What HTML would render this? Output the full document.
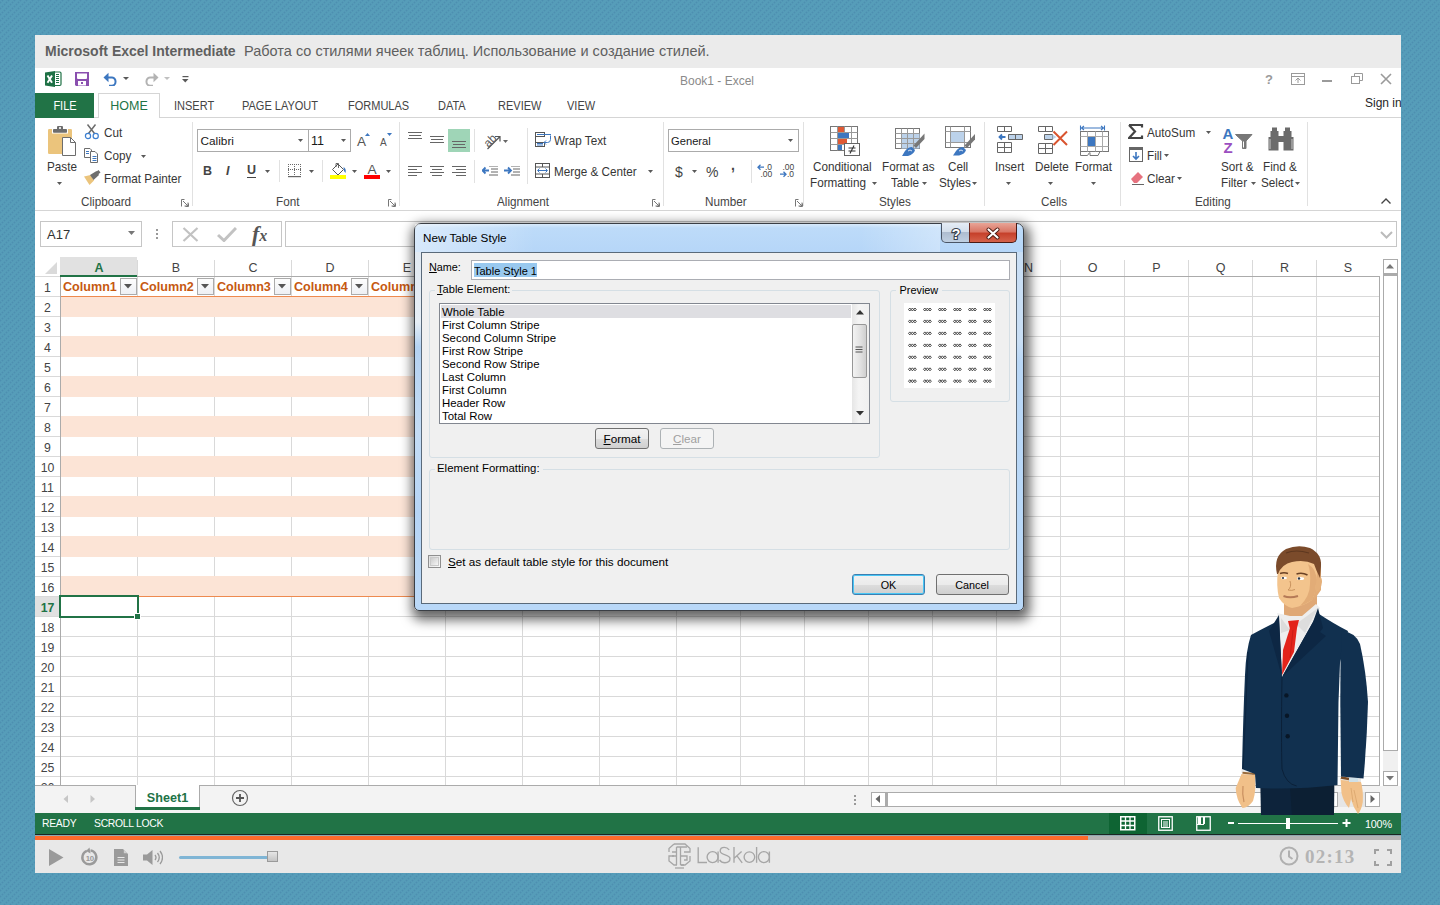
<!DOCTYPE html><html><head><meta charset="utf-8"><style>
html,body{margin:0;padding:0;}
body{width:1440px;height:905px;overflow:hidden;position:relative;background:#539ab7;font-family:"Liberation Sans", sans-serif;}
.t{position:absolute;white-space:nowrap;}
.r{position:absolute;}
</style></head><body>
<div class="r" style="left:0px;top:0px;width:1440px;height:905px;background-color:#569db9;background-image:radial-gradient(circle at 2.5px 0.5px,#4d8fb0 0,#4d8fb0 0.4px,rgba(77,143,176,0) 1.4px),radial-gradient(circle at 0.5px 2.5px,#4d8fb0 0,#4d8fb0 0.4px,rgba(77,143,176,0) 1.4px),radial-gradient(circle at 4.5px 4.5px,#4d8fb0 0,#4d8fb0 0.4px,rgba(77,143,176,0) 1.4px),radial-gradient(circle at 2.5px 6.5px,#4d8fb0 0,#4d8fb0 0.4px,rgba(77,143,176,0) 1.4px),radial-gradient(circle at 6.5px 2.5px,#4d8fb0 0,#4d8fb0 0.4px,rgba(77,143,176,0) 1.4px);background-size:6px 6px"></div>
<div class="r" style="left:35px;top:35px;width:1366px;height:838px;background:#ffffff"></div>
<div class="r" style="left:35px;top:35px;width:1366px;height:33px;background:#ebebeb"></div>
<div class="t" style="left:45px;top:44.15px;font-size:14px;line-height:14px;color:#5f5f5f;font-weight:bold;">Microsoft Excel Intermediate</div>
<div class="t" style="left:244px;top:43.73px;font-size:14.5px;line-height:14.5px;color:#5f5f5f;">Работа со стилями ячеек таблиц. Использование и создание стилей.</div>
<svg class="r" style="left:45px;top:71px" width="17" height="16" viewBox="0 0 17 16"><rect x="9" y="1" width="7" height="13.5" rx="1.2" fill="#fff" stroke="#1e7145" stroke-width="1.2"/><path d="M11 3.5h3M11 5.5h3M11 7.5h3M11 9.5h3M11 11.5h3" stroke="#1e7145" stroke-width="1.1"/><path d="M0 1.5 L10 0 L10 16 L0 14.5 Z" fill="#1e7145"/><path d="M2.5 4.5L7 11.8M7 4.5L2.5 11.8" stroke="#fff" stroke-width="1.9"/></svg>
<svg class="r" style="left:75px;top:72px" width="15" height="14" viewBox="0 0 15 14"><path d="M0 0h14v14h-13l-1-1z" fill="#8a4faf"/><path d="M2 1.5h10v4.5q0 1-1 1h-8q-1 0-1-1z" fill="#fff"/><path d="M3 9h8v4.5h-8z" fill="#fff"/><rect x="6" y="10" width="2" height="2" fill="#8a4faf"/></svg>
<svg class="r" style="left:103px;top:72px" width="16" height="14" viewBox="0 0 16 14"><path d="M2.5 5.5 H9 A4.2 4.2 0 0 1 9 13.8 H6" fill="none" stroke="#3d77c0" stroke-width="2"/><path d="M0.5 5.5 L5.5 0.8 L5.5 10.2 Z" fill="#3d77c0"/></svg>
<svg class="r" style="left:123px;top:77px" width="7" height="4" viewBox="0 0 7 4"><path d="M0 0h6l-3 3z" fill="#595959"/></svg>
<svg class="r" style="left:143px;top:72px" width="16" height="14" viewBox="0 0 16 14"><path d="M13.5 5.5 H7 A4.2 4.2 0 0 0 7 13.8 H10" fill="none" stroke="#b3b3b3" stroke-width="2"/><path d="M15.5 5.5 L10.5 0.8 L10.5 10.2 Z" fill="#b3b3b3"/></svg>
<svg class="r" style="left:164px;top:77px" width="7" height="4" viewBox="0 0 7 4"><path d="M0 0h6l-3 3z" fill="#c0c0c0"/></svg>
<svg class="r" style="left:182px;top:76px" width="7" height="8" viewBox="0 0 7 8"><rect x="0.5" y="0" width="6" height="1.2" fill="#595959"/><path d="M0 3h6.5l-3.25 3.5z" fill="#595959"/></svg>
<div class="t" style="left:617px;width:200px;text-align:center;top:74.84px;font-size:12px;line-height:12px;color:#8a8a8a;">Book1 - Excel</div>
<div class="t" style="left:1169px;width:200px;text-align:center;top:73.00px;font-size:13px;line-height:13px;color:#9a9a9a;font-weight:bold;">?</div>
<svg class="r" style="left:1291px;top:73px" width="14" height="12" viewBox="0 0 14 12"><rect x="0.5" y="0.5" width="13" height="11" fill="none" stroke="#9a9a9a"/><path d="M0.5 3.5h13" stroke="#9a9a9a"/><path d="M7 10V5M4.5 7.5L7 5l2.5 2.5" fill="none" stroke="#9a9a9a"/></svg>
<div class="r" style="left:1322px;top:80px;width:10px;height:2px;background:#9a9a9a"></div>
<svg class="r" style="left:1351px;top:73px" width="12" height="11" viewBox="0 0 12 11"><rect x="0.5" y="3.5" width="8" height="7" fill="none" stroke="#9a9a9a"/><path d="M3.5 3.5V0.5h8v7h-3" fill="none" stroke="#9a9a9a"/></svg>
<svg class="r" style="left:1380px;top:73px" width="12" height="12" viewBox="0 0 12 12"><path d="M1 1L11 11M11 1L1 11" stroke="#9a9a9a" stroke-width="1.6"/></svg>
<div class="t" style="left:1365px;top:96.84px;font-size:12px;line-height:12px;color:#262626;">Sign in</div>
<div class="r" style="left:35px;top:117px;width:1366px;height:1px;background:#d5d5d5"></div>
<div class="r" style="left:35px;top:93px;width:59px;height:25px;background:#217346"></div>
<div class="t" style="left:-35.5px;width:200px;text-align:center;top:100.14px;font-size:12px;line-height:12px;color:#ffffff;transform:scaleX(0.917);transform-origin:50% 0;">FILE</div>
<div class="r" style="left:98px;top:93px;width:62px;height:25px;background:#fff;border:1px solid #d5d5d5;border-bottom:none;box-sizing:border-box"></div>
<div class="t" style="left:28.5px;width:200px;text-align:center;top:100.14px;font-size:12px;line-height:12px;color:#217346;transform:scaleX(1.04);transform-origin:50% 0;">HOME</div>
<div class="t" style="left:174.3px;top:100.14px;font-size:12px;line-height:12px;color:#444444;transform:scaleX(0.917);transform-origin:0 0;">INSERT</div>
<div class="t" style="left:242px;top:100.14px;font-size:12px;line-height:12px;color:#444444;transform:scaleX(0.917);transform-origin:0 0;">PAGE LAYOUT</div>
<div class="t" style="left:348.2px;top:100.14px;font-size:12px;line-height:12px;color:#444444;transform:scaleX(0.917);transform-origin:0 0;">FORMULAS</div>
<div class="t" style="left:438.2px;top:100.14px;font-size:12px;line-height:12px;color:#444444;transform:scaleX(0.917);transform-origin:0 0;">DATA</div>
<div class="t" style="left:498px;top:100.14px;font-size:12px;line-height:12px;color:#444444;transform:scaleX(0.917);transform-origin:0 0;">REVIEW</div>
<div class="t" style="left:566.7px;top:100.14px;font-size:12px;line-height:12px;color:#444444;transform:scaleX(0.917);transform-origin:0 0;">VIEW</div>
<div class="r" style="left:35px;top:210px;width:1366px;height:1px;background:#d5d5d5"></div>
<svg class="r" style="left:47px;top:125px" width="31" height="32" viewBox="0 0 31 32"><rect x="1" y="4" width="24" height="25" rx="1.2" fill="#ebc47c"/><rect x="5" y="3.5" width="16" height="5" fill="#fff"/><rect x="6" y="4" width="14" height="3.8" rx="0.8" fill="#6d6d6d"/><rect x="10" y="1" width="6" height="4" rx="1" fill="#6d6d6d"/><rect x="12" y="2.2" width="2" height="1.6" fill="#fff"/><path d="M15.5 12.5h8l5 5v13h-13z" fill="#fff" stroke="#6d6d6d" stroke-width="1"/><path d="M23.5 12.5v5h5" fill="none" stroke="#6d6d6d"/></svg>
<div class="t" style="left:46.5px;top:161.13px;font-size:12.6px;line-height:12.6px;color:#363636;transform:scaleX(0.93);transform-origin:0 0;">Paste</div>
<svg class="r" style="left:57px;top:182px" width="6" height="4" viewBox="0 0 6 4"><path d="M0 0h5l-2.5 3z" fill="#595959"/></svg>
<svg class="r" style="left:83px;top:123px" width="17" height="17" viewBox="0 0 17 17"><path d="M5.5 10.5L12.5 1.5M11.5 10.5L4.5 1.5" stroke="#6d6d6d" stroke-width="1.5"/><circle cx="5" cy="13" r="2.6" fill="#fff" stroke="#3d7fd0" stroke-width="1.2"/><circle cx="12.7" cy="13" r="2.6" fill="#fff" stroke="#3d7fd0" stroke-width="1.2"/></svg>
<div class="t" style="left:103.5px;top:126.93px;font-size:12.6px;line-height:12.6px;color:#363636;transform:scaleX(0.93);transform-origin:0 0;">Cut</div>
<svg class="r" style="left:83px;top:147px" width="17" height="17" viewBox="0 0 17 17"><path d="M1.5 1.5h5.5l1.5 1.5v7.5h-7z" fill="#fff" stroke="#6d6d6d"/><path d="M3 4.5h3M3 6.5h3" stroke="#3d77c0"/><path d="M7.5 4.5h4.5l2.5 2.5v8.5h-7z" fill="#fff" stroke="#6d6d6d"/><path d="M9.5 9.5h4M9.5 11.5h4M9.5 13.5h4" stroke="#3d77c0"/></svg>
<div class="t" style="left:103.5px;top:149.83px;font-size:12.6px;line-height:12.6px;color:#363636;transform:scaleX(0.93);transform-origin:0 0;">Copy</div>
<svg class="r" style="left:141px;top:155px" width="6" height="4" viewBox="0 0 6 4"><path d="M0 0h5l-2.5 3z" fill="#595959"/></svg>
<svg class="r" style="left:83px;top:170px" width="18" height="16" viewBox="0 0 18 16"><path d="M1 6.5L7.5 5L11 10.5L6.5 15Z" fill="#ebc47c"/><path d="M7 5L13.5 1L16 5L10.5 10Z" fill="#6d6d6d"/><path d="M13 2L15.5 0L17.5 2.5L15 4.5Z" fill="#6d6d6d"/></svg>
<div class="t" style="left:103.5px;top:172.73px;font-size:12.6px;line-height:12.6px;color:#363636;transform:scaleX(0.93);transform-origin:0 0;">Format Painter</div>
<div class="t" style="left:80.6px;top:195.63px;font-size:12.6px;line-height:12.6px;color:#444444;transform:scaleX(0.93);transform-origin:0 0;">Clipboard</div>
<svg class="r" style="left:181px;top:199px" width="8" height="8" viewBox="0 0 8 8"><path d="M0.5 7.5V0.5h3M7.5 4.5v3h-3" fill="none" stroke="#777" stroke-width="1"/><path d="M2 2L7 7M7 3.5V7H3.5" fill="none" stroke="#777" stroke-width="1"/></svg>
<div class="r" style="left:192px;top:122px;width:1px;height:84px;background:#e1e1e1"></div>
<div class="r" style="left:197px;top:129px;width:112px;height:23px;border:1px solid #ababab;box-sizing:border-box;background:#fff"></div>
<div class="r" style="left:308px;top:129px;width:43px;height:23px;border:1px solid #ababab;box-sizing:border-box;background:#fff"></div>
<div class="t" style="left:200.5px;top:135.51px;font-size:11.8px;line-height:11.8px;color:#1a1a1a;">Calibri</div>
<div class="t" style="left:311px;top:134.92px;font-size:12.5px;line-height:12.5px;color:#1a1a1a;">11</div>
<svg class="r" style="left:298px;top:139px" width="6" height="4" viewBox="0 0 6 4"><path d="M0 0h5l-2.5 3z" fill="#595959"/></svg>
<svg class="r" style="left:341px;top:139px" width="6" height="4" viewBox="0 0 6 4"><path d="M0 0h5l-2.5 3z" fill="#595959"/></svg>
<div class="t" style="left:357px;top:134.57px;font-size:13.5px;line-height:13.5px;color:#555;">A</div>
<svg class="r" style="left:365px;top:133px" width="6" height="4" viewBox="0 0 6 4"><path d="M0 3h5l-2.5-3z" fill="#3d77c0"/></svg>
<div class="t" style="left:380px;top:137.53px;font-size:10px;line-height:10px;color:#555;">A</div>
<svg class="r" style="left:387px;top:133px" width="6" height="4" viewBox="0 0 6 4"><path d="M0 0h5l-2.5 3z" fill="#3d77c0"/></svg>
<div class="t" style="left:203px;top:165.42px;font-size:12.5px;line-height:12.5px;color:#444;font-weight:bold;">B</div>
<div class="t" style="left:226px;top:165.42px;font-size:12.5px;line-height:12.5px;color:#444;font-weight:bold;font-style:italic;">I</div>
<div class="t" style="left:247px;top:164.42px;font-size:12.5px;line-height:12.5px;color:#444;font-weight:bold;">U</div>
<div class="r" style="left:247px;top:177px;width:9px;height:1px;background:#444"></div>
<svg class="r" style="left:265px;top:170px" width="6" height="4" viewBox="0 0 6 4"><path d="M0 0h5l-2.5 3z" fill="#595959"/></svg>
<div class="r" style="left:279px;top:160px;width:1px;height:22px;background:#e1e1e1"></div>
<svg class="r" style="left:288px;top:164px" width="14" height="14" viewBox="0 0 14 14"><rect x="0" y="0" width="1" height="1" fill="#6a6a6a"/><rect x="0" y="2" width="1" height="1" fill="#6a6a6a"/><rect x="0" y="4" width="1" height="1" fill="#6a6a6a"/><rect x="0" y="5" width="1" height="1" fill="#6a6a6a"/><rect x="0" y="6" width="1" height="1" fill="#6a6a6a"/><rect x="0" y="8" width="1" height="1" fill="#6a6a6a"/><rect x="0" y="10" width="1" height="1" fill="#6a6a6a"/><rect x="2" y="0" width="1" height="1" fill="#6a6a6a"/><rect x="2" y="5" width="1" height="1" fill="#6a6a6a"/><rect x="4" y="0" width="1" height="1" fill="#6a6a6a"/><rect x="4" y="5" width="1" height="1" fill="#6a6a6a"/><rect x="6" y="0" width="1" height="1" fill="#6a6a6a"/><rect x="6" y="2" width="1" height="1" fill="#6a6a6a"/><rect x="6" y="4" width="1" height="1" fill="#6a6a6a"/><rect x="6" y="5" width="1" height="1" fill="#6a6a6a"/><rect x="6" y="6" width="1" height="1" fill="#6a6a6a"/><rect x="6" y="8" width="1" height="1" fill="#6a6a6a"/><rect x="6" y="10" width="1" height="1" fill="#6a6a6a"/><rect x="8" y="0" width="1" height="1" fill="#6a6a6a"/><rect x="8" y="5" width="1" height="1" fill="#6a6a6a"/><rect x="10" y="0" width="1" height="1" fill="#6a6a6a"/><rect x="10" y="5" width="1" height="1" fill="#6a6a6a"/><rect x="12" y="0" width="1" height="1" fill="#6a6a6a"/><rect x="12" y="2" width="1" height="1" fill="#6a6a6a"/><rect x="12" y="4" width="1" height="1" fill="#6a6a6a"/><rect x="12" y="5" width="1" height="1" fill="#6a6a6a"/><rect x="12" y="6" width="1" height="1" fill="#6a6a6a"/><rect x="12" y="8" width="1" height="1" fill="#6a6a6a"/><rect x="12" y="10" width="1" height="1" fill="#6a6a6a"/><rect x="0" y="12" width="13" height="1.2" fill="#666"/></svg>
<svg class="r" style="left:309px;top:170px" width="6" height="4" viewBox="0 0 6 4"><path d="M0 0h5l-2.5 3z" fill="#595959"/></svg>
<div class="r" style="left:322px;top:160px;width:1px;height:22px;background:#e1e1e1"></div>
<svg class="r" style="left:330px;top:162px" width="18" height="17" viewBox="0 0 18 17"><path d="M2.5 7.5L8 2L13.5 7.5L8 13Z" fill="#fff" stroke="#555" stroke-width="1"/><path d="M6 5V1.5h2.5V6" fill="none" stroke="#555" stroke-width="0.9"/><path d="M13.5 5q3 1.5 2 6l-1.5-2z" fill="#3d77c0"/><rect x="0" y="13" width="16" height="4" fill="#ffff00"/></svg>
<svg class="r" style="left:352px;top:170px" width="6" height="4" viewBox="0 0 6 4"><path d="M0 0h5l-2.5 3z" fill="#595959"/></svg>
<div class="t" style="left:367.5px;top:163.40px;font-size:13.7px;line-height:13.7px;color:#555;">A</div>
<div class="r" style="left:364px;top:175px;width:16px;height:4px;background:#ff0000"></div>
<svg class="r" style="left:386px;top:170px" width="6" height="4" viewBox="0 0 6 4"><path d="M0 0h5l-2.5 3z" fill="#595959"/></svg>
<div class="t" style="left:276px;top:195.63px;font-size:12.6px;line-height:12.6px;color:#444444;transform:scaleX(0.93);transform-origin:0 0;">Font</div>
<svg class="r" style="left:388px;top:199px" width="8" height="8" viewBox="0 0 8 8"><path d="M0.5 7.5V0.5h3M7.5 4.5v3h-3" fill="none" stroke="#777" stroke-width="1"/><path d="M2 2L7 7M7 3.5V7H3.5" fill="none" stroke="#777" stroke-width="1"/></svg>
<div class="r" style="left:399px;top:122px;width:1px;height:84px;background:#e1e1e1"></div>
<svg class="r" style="left:408px;top:132px" width="16" height="16" viewBox="0 0 16 16"><rect x="0" y="0" width="14" height="1" fill="#666666"/><rect x="1" y="3" width="12" height="1" fill="#666666"/><rect x="0" y="6" width="14" height="1" fill="#666666"/></svg>
<svg class="r" style="left:430px;top:136px" width="16" height="16" viewBox="0 0 16 16"><rect x="0" y="0" width="14" height="1" fill="#666666"/><rect x="1" y="3" width="12" height="1" fill="#666666"/><rect x="0" y="6" width="14" height="1" fill="#666666"/></svg>
<div class="r" style="left:448px;top:129px;width:22px;height:23px;background:#9fd5b7"></div>
<svg class="r" style="left:452px;top:141px" width="16" height="16" viewBox="0 0 16 16"><rect x="0" y="0" width="14" height="1" fill="#666666"/><rect x="1" y="3" width="12" height="1" fill="#666666"/><rect x="0" y="6" width="14" height="1" fill="#666666"/></svg>
<div class="r" style="left:474px;top:129px;width:1px;height:23px;background:#e1e1e1"></div>
<svg class="r" style="left:482px;top:131px" width="27" height="19" viewBox="0 0 27 19"><text x="1" y="14" font-size="11.5" fill="#555" font-family="Liberation Sans" transform="rotate(-45 7 9)">ab</text><path d="M5.5 18L17.5 6M13 5.5h5v5" fill="none" stroke="#555" stroke-width="1.2"/><path d="M21 9h5l-2.5 3z" fill="#666"/></svg>
<div class="r" style="left:527px;top:128px;width:1px;height:56px;background:#e1e1e1"></div>
<svg class="r" style="left:535px;top:132px" width="17" height="16" viewBox="0 0 17 16"><rect x="0.5" y="0.5" width="9" height="4" fill="none" stroke="#555"/><rect x="0.5" y="10.5" width="9" height="4" fill="none" stroke="#555"/><path d="M0.5 4.5v6" stroke="#555"/><path d="M2 2.5h14M2 11.5h6M2 13h6" stroke="#3d77c0"/><path d="M15.5 3.5v4a3 3 0 0 1-3 3H9M11 8.5l-2 2 2 2" fill="none" stroke="#3d77c0"/></svg>
<div class="t" style="left:554px;top:135.13px;font-size:12.6px;line-height:12.6px;color:#363636;transform:scaleX(0.93);transform-origin:0 0;">Wrap Text</div>
<svg class="r" style="left:408px;top:166px" width="16" height="16" viewBox="0 0 16 16"><rect x="0" y="0" width="14" height="1" fill="#666666"/><rect x="0" y="3" width="9" height="1" fill="#666666"/><rect x="0" y="6" width="14" height="1" fill="#666666"/><rect x="0" y="9" width="9" height="1" fill="#666666"/></svg>
<svg class="r" style="left:430px;top:166px" width="16" height="16" viewBox="0 0 16 16"><rect x="0" y="0" width="14" height="1" fill="#666666"/><rect x="2" y="3" width="10" height="1" fill="#666666"/><rect x="0" y="6" width="14" height="1" fill="#666666"/><rect x="2" y="9" width="10" height="1" fill="#666666"/></svg>
<svg class="r" style="left:452px;top:166px" width="16" height="16" viewBox="0 0 16 16"><rect x="0" y="0" width="14" height="1" fill="#666666"/><rect x="4" y="3" width="10" height="1" fill="#666666"/><rect x="0" y="6" width="14" height="1" fill="#666666"/><rect x="4" y="9" width="10" height="1" fill="#666666"/></svg>
<div class="r" style="left:474px;top:160px;width:1px;height:23px;background:#e1e1e1"></div>
<svg class="r" style="left:482px;top:166px" width="17" height="11" viewBox="0 0 17 11"><path d="M7 0h9M9 3h7M9 6h7M7 9h9" stroke="#666"/><path d="M0 4.5h7M3.5 1.5L0.5 4.5l3 3" fill="none" stroke="#3d77c0" stroke-width="1.8"/></svg>
<svg class="r" style="left:504px;top:166px" width="17" height="11" viewBox="0 0 17 11"><path d="M7 0h9M9 3h7M9 6h7M7 9h9" stroke="#666"/><path d="M0 4.5h7M4 1.5l3 3-3 3" fill="none" stroke="#3d77c0" stroke-width="1.8"/></svg>
<svg class="r" style="left:535px;top:163px" width="16" height="16" viewBox="0 0 16 16"><rect x="0.5" y="0.5" width="14" height="14" fill="none" stroke="#555"/><path d="M0.5 4h14M0.5 11h14M7.5 0.5v3.5M7.5 11v3.5" stroke="#555"/><path d="M3 7.5h9M4.5 5.5l-2 2 2 2M10.5 5.5l2 2-2 2" fill="none" stroke="#3d77c0"/></svg>
<div class="t" style="left:554px;top:166.13px;font-size:12.6px;line-height:12.6px;color:#363636;transform:scaleX(0.93);transform-origin:0 0;">Merge &amp; Center</div>
<svg class="r" style="left:648px;top:170px" width="6" height="4" viewBox="0 0 6 4"><path d="M0 0h5l-2.5 3z" fill="#595959"/></svg>
<div class="t" style="left:497px;top:195.63px;font-size:12.6px;line-height:12.6px;color:#444444;transform:scaleX(0.93);transform-origin:0 0;">Alignment</div>
<svg class="r" style="left:652px;top:199px" width="8" height="8" viewBox="0 0 8 8"><path d="M0.5 7.5V0.5h3M7.5 4.5v3h-3" fill="none" stroke="#777" stroke-width="1"/><path d="M2 2L7 7M7 3.5V7H3.5" fill="none" stroke="#777" stroke-width="1"/></svg>
<div class="r" style="left:663px;top:122px;width:1px;height:84px;background:#e1e1e1"></div>
<div class="r" style="left:668px;top:129px;width:131px;height:23px;border:1px solid #ababab;box-sizing:border-box;background:#fff"></div>
<div class="t" style="left:671px;top:136.02px;font-size:11.2px;line-height:11.2px;color:#1a1a1a;">General</div>
<svg class="r" style="left:788px;top:139px" width="6" height="4" viewBox="0 0 6 4"><path d="M0 0h5l-2.5 3z" fill="#595959"/></svg>
<div class="t" style="left:675px;top:164.65px;font-size:14px;line-height:14px;color:#444;">$</div>
<svg class="r" style="left:692px;top:170px" width="6" height="4" viewBox="0 0 6 4"><path d="M0 0h5l-2.5 3z" fill="#595959"/></svg>
<div class="t" style="left:706px;top:164.65px;font-size:14px;line-height:14px;color:#444;">%</div>
<div class="t" style="left:731px;top:158.15px;font-size:14px;line-height:14px;color:#444;font-weight:bold;">,</div>
<div class="r" style="left:751px;top:160px;width:1px;height:23px;background:#e1e1e1"></div>
<svg class="r" style="left:757px;top:163px" width="16" height="15" viewBox="0 0 16 15"><text x="8" y="6.5" font-size="8.5" fill="#444" font-family="Liberation Sans">.0</text><text x="3.5" y="13.8" font-size="8.5" fill="#444" font-family="Liberation Sans">.00</text><path d="M1 4.2h6M3.5 1.7L1 4.2l2.5 2.5" fill="none" stroke="#3d77c0" stroke-width="1.3"/></svg>
<svg class="r" style="left:779px;top:163px" width="16" height="15" viewBox="0 0 16 15"><text x="3.5" y="6.5" font-size="8.5" fill="#444" font-family="Liberation Sans">.00</text><text x="8" y="13.8" font-size="8.5" fill="#444" font-family="Liberation Sans">.0</text><path d="M1 11.2h6M4.5 8.7L7 11.2l-2.5 2.5" fill="none" stroke="#3d77c0" stroke-width="1.3"/></svg>
<div class="t" style="left:705px;top:195.63px;font-size:12.6px;line-height:12.6px;color:#444444;transform:scaleX(0.93);transform-origin:0 0;">Number</div>
<svg class="r" style="left:795px;top:199px" width="8" height="8" viewBox="0 0 8 8"><path d="M0.5 7.5V0.5h3M7.5 4.5v3h-3" fill="none" stroke="#777" stroke-width="1"/><path d="M2 2L7 7M7 3.5V7H3.5" fill="none" stroke="#777" stroke-width="1"/></svg>
<div class="r" style="left:803px;top:122px;width:1px;height:84px;background:#e1e1e1"></div>
<svg class="r" style="left:829px;top:125px" width="32" height="32" viewBox="0 0 32 32"><rect x="1.5" y="1.5" width="27" height="24" fill="#fff" stroke="#777"/><path d="M8.5 1.5v24M15.5 1.5v24M22.5 1.5v24M1.5 7.5h27M1.5 13.5h27M1.5 19.5h27" stroke="#999"/><rect x="9" y="2" width="6" height="5" fill="#e05a35"/><rect x="9" y="8" width="11" height="5" fill="#3d77c0"/><rect x="9" y="14" width="9" height="5" fill="#e05a35"/><rect x="9" y="20" width="4" height="5" fill="#3d77c0"/><rect x="15.5" y="18.5" width="15" height="12" fill="#fff" stroke="#666"/><path d="M19.5 23h7M19.5 26h7M25 20.5l-4 8" stroke="#333" stroke-width="1.1"/></svg>
<div class="t" style="left:813px;top:161.33px;font-size:12.6px;line-height:12.6px;color:#363636;transform:scaleX(0.93);transform-origin:0 0;">Conditional</div>
<div class="t" style="left:810px;top:177.13px;font-size:12.6px;line-height:12.6px;color:#363636;transform:scaleX(0.93);transform-origin:0 0;">Formatting</div>
<svg class="r" style="left:872px;top:182px" width="6" height="4" viewBox="0 0 6 4"><path d="M0 0h5l-2.5 3z" fill="#595959"/></svg>
<svg class="r" style="left:894px;top:127px" width="32" height="30" viewBox="0 0 32 30"><rect x="1.5" y="1.5" width="24" height="20" fill="#fff" stroke="#777"/><rect x="7.5" y="6.5" width="18" height="15" fill="#bcd2ea"/><path d="M7.5 1.5v20M13.5 1.5v20M19.5 1.5v20M1.5 6.5h24M1.5 11.5h24M1.5 16.5h24" stroke="#999"/><path d="M30.5 6.5L30.5 12L22 21L19.5 18.5Z" fill="#777"/><path d="M18 20Q14 20 11 24L8 29H14Q20 27 21 23Z" fill="#3d77c0"/><path d="M14 24q2-2 4 0" stroke="#fff" stroke-width="0.8" fill="none"/></svg>
<div class="t" style="left:882px;top:161.33px;font-size:12.6px;line-height:12.6px;color:#363636;transform:scaleX(0.93);transform-origin:0 0;">Format as</div>
<div class="t" style="left:891px;top:177.13px;font-size:12.6px;line-height:12.6px;color:#363636;transform:scaleX(0.93);transform-origin:0 0;">Table</div>
<svg class="r" style="left:922px;top:182px" width="6" height="4" viewBox="0 0 6 4"><path d="M0 0h5l-2.5 3z" fill="#595959"/></svg>
<svg class="r" style="left:944px;top:125px" width="32" height="32" viewBox="0 0 32 32"><rect x="1.5" y="1.5" width="25" height="21" fill="#fff" stroke="#777"/><rect x="6.5" y="6.5" width="14" height="11" fill="#bcd2ea"/><path d="M6.5 1.5v21M20.5 1.5v21M1.5 6.5h25M1.5 17.5h25" stroke="#999"/><path d="M31 9L31 14.5L23 23L20.5 20.5Z" fill="#777"/><path d="M19 22Q15 22 12 26L9 30.5H15Q21 29 22 25Z" fill="#3d77c0"/><path d="M15 26q2-2 4 0" stroke="#fff" stroke-width="0.8" fill="none"/></svg>
<div class="t" style="left:948px;top:161.33px;font-size:12.6px;line-height:12.6px;color:#363636;transform:scaleX(0.93);transform-origin:0 0;">Cell</div>
<div class="t" style="left:939px;top:177.13px;font-size:12.6px;line-height:12.6px;color:#363636;transform:scaleX(0.93);transform-origin:0 0;">Styles</div>
<svg class="r" style="left:972px;top:182px" width="6" height="4" viewBox="0 0 6 4"><path d="M0 0h5l-2.5 3z" fill="#595959"/></svg>
<div class="t" style="left:879px;top:195.63px;font-size:12.6px;line-height:12.6px;color:#444444;transform:scaleX(0.93);transform-origin:0 0;">Styles</div>
<div class="r" style="left:984px;top:122px;width:1px;height:84px;background:#e1e1e1"></div>
<svg class="r" style="left:996px;top:125px" width="28" height="30" viewBox="0 0 28 30"><path d="M1.5 1.5h14v5h-14zM8.5 1.5v5" fill="#fff" stroke="#666"/><path d="M12.5 9.5h14v5h-14zM19.5 9.5v5" fill="#bcd2ea" stroke="#666"/><path d="M3.5 12h6M6 9.5l-2.5 2.5 2.5 2.5" fill="none" stroke="#3d77c0" stroke-width="1.8"/><path d="M1.5 17.5h14v10h-14zM8.5 17.5v10M1.5 22.5h14" fill="#fff" stroke="#666"/></svg>
<div class="t" style="left:994.8px;top:161.33px;font-size:12.6px;line-height:12.6px;color:#363636;transform:scaleX(0.93);transform-origin:0 0;">Insert</div>
<svg class="r" style="left:1006px;top:182px" width="6" height="4" viewBox="0 0 6 4"><path d="M0 0h5l-2.5 3z" fill="#595959"/></svg>
<svg class="r" style="left:1037px;top:125px" width="32" height="31" viewBox="0 0 32 31"><path d="M1.5 1.5h14v5h-14zM8.5 1.5v5" fill="#fff" stroke="#666"/><path d="M7.5 9.5h8v5h-8z" fill="#bcd2ea" stroke="#666"/><path d="M15.5 9.5l4 2.5-4 2.5z" fill="#bcd2ea"/><path d="M1.5 18.5h14v10h-14zM8.5 18.5v10M1.5 23.5h14" fill="#fff" stroke="#666"/><path d="M16.5 6.5L30 20M30 6.5L16.5 20" stroke="#d9542f" stroke-width="2"/></svg>
<div class="t" style="left:1035px;top:161.33px;font-size:12.6px;line-height:12.6px;color:#363636;transform:scaleX(0.93);transform-origin:0 0;">Delete</div>
<svg class="r" style="left:1048px;top:182px" width="6" height="4" viewBox="0 0 6 4"><path d="M0 0h5l-2.5 3z" fill="#595959"/></svg>
<svg class="r" style="left:1079px;top:125px" width="30" height="32" viewBox="0 0 30 32"><path d="M1.5 0.5v5M25.5 0.5v5M2 3h23M5 1l-2.5 2 2.5 2M22 1l2.5 2-2.5 2" fill="none" stroke="#3d77c0" stroke-width="1.1"/><rect x="1.5" y="6.5" width="28" height="20" fill="#fff" stroke="#777"/><path d="M8.5 6.5v20M16.5 6.5v20M23.5 6.5v20M1.5 11.5h28M1.5 21.5h28" stroke="#aaa"/><rect x="9" y="12" width="7" height="9" fill="#3d77c0"/><path d="M1.5 26.5v4h7l2-3M11 27.5v3h8l2-4" fill="none" stroke="#777"/></svg>
<div class="t" style="left:1075px;top:161.33px;font-size:12.6px;line-height:12.6px;color:#363636;transform:scaleX(0.93);transform-origin:0 0;">Format</div>
<svg class="r" style="left:1091px;top:182px" width="6" height="4" viewBox="0 0 6 4"><path d="M0 0h5l-2.5 3z" fill="#595959"/></svg>
<div class="t" style="left:1041px;top:195.63px;font-size:12.6px;line-height:12.6px;color:#444444;transform:scaleX(0.93);transform-origin:0 0;">Cells</div>
<div class="r" style="left:1120px;top:122px;width:1px;height:84px;background:#e1e1e1"></div>
<svg class="r" style="left:1128px;top:124px" width="16" height="16" viewBox="0 0 16 16"><path d="M1 1h13v2.5M1 1l6 6.5L1 14h13v-2.5" fill="none" stroke="#444" stroke-width="2.2"/></svg>
<div class="t" style="left:1147px;top:126.93px;font-size:12.6px;line-height:12.6px;color:#363636;transform:scaleX(0.93);transform-origin:0 0;">AutoSum</div>
<svg class="r" style="left:1206px;top:131px" width="6" height="4" viewBox="0 0 6 4"><path d="M0 0h5l-2.5 3z" fill="#595959"/></svg>
<svg class="r" style="left:1129px;top:147px" width="15" height="16" viewBox="0 0 15 16"><rect x="0.5" y="0.5" width="13" height="14" fill="#fff" stroke="#666"/><rect x="0" y="0" width="14" height="3" fill="#666"/><path d="M7 5v7M4 9l3 3 3-3" fill="none" stroke="#3d77c0" stroke-width="1.6"/></svg>
<div class="t" style="left:1147px;top:149.83px;font-size:12.6px;line-height:12.6px;color:#363636;transform:scaleX(0.93);transform-origin:0 0;">Fill</div>
<svg class="r" style="left:1164px;top:154px" width="6" height="4" viewBox="0 0 6 4"><path d="M0 0h5l-2.5 3z" fill="#595959"/></svg>
<svg class="r" style="left:1130px;top:170px" width="15" height="15" viewBox="0 0 15 15"><path d="M1 9L8 2L13 7L7 13H4Z" fill="#e6727f"/><path d="M2 14.5h12" stroke="#666"/></svg>
<div class="t" style="left:1147px;top:172.73px;font-size:12.6px;line-height:12.6px;color:#363636;transform:scaleX(0.93);transform-origin:0 0;">Clear</div>
<svg class="r" style="left:1177px;top:177px" width="6" height="4" viewBox="0 0 6 4"><path d="M0 0h5l-2.5 3z" fill="#595959"/></svg>
<svg class="r" style="left:1222px;top:126px" width="32" height="28" viewBox="0 0 32 28"><text x="0.5" y="12.8" font-size="15" font-weight="bold" fill="#3d77c0" font-family="Liberation Sans">A</text><text x="1.5" y="26.8" font-size="15" font-weight="bold" fill="#9b4fc0" font-family="Liberation Sans">Z</text><path d="M13.5 8.5h16.5l-6 6.5v7.5h-3.5v-7.5z" fill="#777" stroke="#777" stroke-linejoin="round"/><path d="M21.5 15.5v6" stroke="#fff" stroke-width="1"/></svg>
<div class="t" style="left:1221px;top:161.33px;font-size:12.6px;line-height:12.6px;color:#363636;transform:scaleX(0.93);transform-origin:0 0;">Sort &amp;</div>
<div class="t" style="left:1221px;top:177.13px;font-size:12.6px;line-height:12.6px;color:#363636;transform:scaleX(0.93);transform-origin:0 0;">Filter</div>
<svg class="r" style="left:1251px;top:182px" width="6" height="4" viewBox="0 0 6 4"><path d="M0 0h5l-2.5 3z" fill="#595959"/></svg>
<svg class="r" style="left:1267px;top:127px" width="28" height="25" viewBox="0 0 28 25"><g fill="#6b6b6b"><rect x="5" y="0.5" width="5" height="4"/><rect x="3.5" y="4" width="8" height="7"/><rect x="1.5" y="10" width="10" height="13.5"/><rect x="18" y="0.5" width="5" height="4"/><rect x="16.5" y="4" width="8" height="7"/><rect x="16.5" y="10" width="10" height="13.5"/><rect x="11" y="9" width="6" height="6"/></g><path d="M3 12v10M25 12v10" stroke="#e0e0e0" stroke-width="0.8"/></svg>
<div class="t" style="left:1263px;top:161.33px;font-size:12.6px;line-height:12.6px;color:#363636;transform:scaleX(0.93);transform-origin:0 0;">Find &amp;</div>
<div class="t" style="left:1261px;top:177.13px;font-size:12.6px;line-height:12.6px;color:#363636;transform:scaleX(0.93);transform-origin:0 0;">Select</div>
<svg class="r" style="left:1295px;top:182px" width="6" height="4" viewBox="0 0 6 4"><path d="M0 0h5l-2.5 3z" fill="#595959"/></svg>
<div class="t" style="left:1195px;top:195.63px;font-size:12.6px;line-height:12.6px;color:#444444;transform:scaleX(0.93);transform-origin:0 0;">Editing</div>
<div class="r" style="left:1307px;top:122px;width:1px;height:84px;background:#e1e1e1"></div>
<svg class="r" style="left:1381px;top:198px" width="10" height="6" viewBox="0 0 10 6"><path d="M0.5 5.5L5 1l4.5 4.5" fill="none" stroke="#444" stroke-width="1.4"/></svg>
<div class="r" style="left:40px;top:221px;width:102px;height:26px;border:1px solid #c6c6c6;box-sizing:border-box;background:#fff"></div>
<div class="t" style="left:47px;top:228.00px;font-size:13px;line-height:13px;color:#333;">A17</div>
<svg class="r" style="left:128px;top:231px" width="8" height="5" viewBox="0 0 8 5"><path d="M0 0h7l-3.5 4z" fill="#777"/></svg>
<div class="r" style="left:156px;top:229px;width:2px;height:2px;background:#999"></div>
<div class="r" style="left:156px;top:233px;width:2px;height:2px;background:#999"></div>
<div class="r" style="left:156px;top:237px;width:2px;height:2px;background:#999"></div>
<div class="r" style="left:172px;top:221px;width:110px;height:26px;border:1px solid #c6c6c6;box-sizing:border-box;background:#fff"></div>
<svg class="r" style="left:182px;top:227px" width="17" height="15" viewBox="0 0 17 15"><path d="M1.5 1L15.5 14M15.5 1L1.5 14" stroke="#c2c2c2" stroke-width="2.2"/></svg>
<svg class="r" style="left:217px;top:227px" width="20" height="15" viewBox="0 0 20 15"><path d="M1 8L7 13.5L19 1" fill="none" stroke="#c2c2c2" stroke-width="3"/></svg>
<div class="t" style="left:252px;top:223.38px;font-size:22px;line-height:22px;color:#555;font-family:Liberation Serif,serif;font-weight:bold;"><i>f</i><i style="font-size:16px">x</i></div>
<div class="r" style="left:285px;top:221px;width:1112px;height:26px;border:1px solid #c6c6c6;box-sizing:border-box;background:#fff"></div>
<svg class="r" style="left:1380px;top:231px" width="13" height="8" viewBox="0 0 13 8"><path d="M1 1l5.5 5.5L12 1" fill="none" stroke="#bbb" stroke-width="2"/></svg>
<svg class="r" style="left:45px;top:262px" width="13" height="12" viewBox="0 0 13 12"><path d="M12 0V12H0Z" fill="#dadada"/></svg>
<div class="r" style="left:60px;top:257px;width:77px;height:19px;background:#e1e1e1"></div>
<div class="r" style="left:60px;top:275px;width:77px;height:2px;background:#217346"></div>
<div class="t" style="left:-1.0px;width:200px;text-align:center;top:262.42px;font-size:12.5px;line-height:12.5px;color:#217346;font-weight:bold;">A</div>
<div class="r" style="left:137px;top:260px;width:1px;height:17px;background:#d9d9d9"></div>
<div class="t" style="left:76.0px;width:200px;text-align:center;top:262.42px;font-size:12.5px;line-height:12.5px;color:#444;">B</div>
<div class="r" style="left:214px;top:260px;width:1px;height:17px;background:#d9d9d9"></div>
<div class="t" style="left:153.0px;width:200px;text-align:center;top:262.42px;font-size:12.5px;line-height:12.5px;color:#444;">C</div>
<div class="r" style="left:291px;top:260px;width:1px;height:17px;background:#d9d9d9"></div>
<div class="t" style="left:230.0px;width:200px;text-align:center;top:262.42px;font-size:12.5px;line-height:12.5px;color:#444;">D</div>
<div class="r" style="left:368px;top:260px;width:1px;height:17px;background:#d9d9d9"></div>
<div class="t" style="left:307.0px;width:200px;text-align:center;top:262.42px;font-size:12.5px;line-height:12.5px;color:#444;">E</div>
<div class="r" style="left:445px;top:260px;width:1px;height:17px;background:#d9d9d9"></div>
<div class="t" style="left:384.0px;width:200px;text-align:center;top:262.42px;font-size:12.5px;line-height:12.5px;color:#444;">F</div>
<div class="r" style="left:522px;top:260px;width:1px;height:17px;background:#d9d9d9"></div>
<div class="t" style="left:461.0px;width:200px;text-align:center;top:262.42px;font-size:12.5px;line-height:12.5px;color:#444;">G</div>
<div class="r" style="left:599px;top:260px;width:1px;height:17px;background:#d9d9d9"></div>
<div class="t" style="left:538.0px;width:200px;text-align:center;top:262.42px;font-size:12.5px;line-height:12.5px;color:#444;">H</div>
<div class="r" style="left:676px;top:260px;width:1px;height:17px;background:#d9d9d9"></div>
<div class="t" style="left:608.5px;width:200px;text-align:center;top:262.42px;font-size:12.5px;line-height:12.5px;color:#444;">I</div>
<div class="r" style="left:740px;top:260px;width:1px;height:17px;background:#d9d9d9"></div>
<div class="t" style="left:672.5px;width:200px;text-align:center;top:262.42px;font-size:12.5px;line-height:12.5px;color:#444;">J</div>
<div class="r" style="left:804px;top:260px;width:1px;height:17px;background:#d9d9d9"></div>
<div class="t" style="left:736.5px;width:200px;text-align:center;top:262.42px;font-size:12.5px;line-height:12.5px;color:#444;">K</div>
<div class="r" style="left:868px;top:260px;width:1px;height:17px;background:#d9d9d9"></div>
<div class="t" style="left:800.5px;width:200px;text-align:center;top:262.42px;font-size:12.5px;line-height:12.5px;color:#444;">L</div>
<div class="r" style="left:932px;top:260px;width:1px;height:17px;background:#d9d9d9"></div>
<div class="t" style="left:864.5px;width:200px;text-align:center;top:262.42px;font-size:12.5px;line-height:12.5px;color:#444;">M</div>
<div class="r" style="left:996px;top:260px;width:1px;height:17px;background:#d9d9d9"></div>
<div class="t" style="left:928.5px;width:200px;text-align:center;top:262.42px;font-size:12.5px;line-height:12.5px;color:#444;">N</div>
<div class="r" style="left:1060px;top:260px;width:1px;height:17px;background:#d9d9d9"></div>
<div class="t" style="left:992.5px;width:200px;text-align:center;top:262.42px;font-size:12.5px;line-height:12.5px;color:#444;">O</div>
<div class="r" style="left:1124px;top:260px;width:1px;height:17px;background:#d9d9d9"></div>
<div class="t" style="left:1056.5px;width:200px;text-align:center;top:262.42px;font-size:12.5px;line-height:12.5px;color:#444;">P</div>
<div class="r" style="left:1188px;top:260px;width:1px;height:17px;background:#d9d9d9"></div>
<div class="t" style="left:1120.5px;width:200px;text-align:center;top:262.42px;font-size:12.5px;line-height:12.5px;color:#444;">Q</div>
<div class="r" style="left:1252px;top:260px;width:1px;height:17px;background:#d9d9d9"></div>
<div class="t" style="left:1184.5px;width:200px;text-align:center;top:262.42px;font-size:12.5px;line-height:12.5px;color:#444;">R</div>
<div class="r" style="left:1316px;top:260px;width:1px;height:17px;background:#d9d9d9"></div>
<div class="t" style="left:1248.0px;width:200px;text-align:center;top:262.42px;font-size:12.5px;line-height:12.5px;color:#444;">S</div>
<div class="r" style="left:35px;top:276px;width:25px;height:1px;background:#d9d9d9"></div>
<div class="r" style="left:137px;top:276px;width:1243px;height:1px;background:#ababab"></div>
<div class="r" style="left:60px;top:277px;width:1px;height:508px;background:#ababab"></div>
<div class="r" style="left:35px;top:296px;width:25px;height:1px;background:#d9d9d9"></div>
<div class="r" style="left:61px;top:296px;width:1318px;height:1px;background:#d9d9d9"></div>
<div class="r" style="left:35px;top:316px;width:25px;height:1px;background:#d9d9d9"></div>
<div class="r" style="left:61px;top:316px;width:1318px;height:1px;background:#d9d9d9"></div>
<div class="r" style="left:35px;top:336px;width:25px;height:1px;background:#d9d9d9"></div>
<div class="r" style="left:61px;top:336px;width:1318px;height:1px;background:#d9d9d9"></div>
<div class="r" style="left:35px;top:356px;width:25px;height:1px;background:#d9d9d9"></div>
<div class="r" style="left:61px;top:356px;width:1318px;height:1px;background:#d9d9d9"></div>
<div class="r" style="left:35px;top:376px;width:25px;height:1px;background:#d9d9d9"></div>
<div class="r" style="left:61px;top:376px;width:1318px;height:1px;background:#d9d9d9"></div>
<div class="r" style="left:35px;top:396px;width:25px;height:1px;background:#d9d9d9"></div>
<div class="r" style="left:61px;top:396px;width:1318px;height:1px;background:#d9d9d9"></div>
<div class="r" style="left:35px;top:416px;width:25px;height:1px;background:#d9d9d9"></div>
<div class="r" style="left:61px;top:416px;width:1318px;height:1px;background:#d9d9d9"></div>
<div class="r" style="left:35px;top:436px;width:25px;height:1px;background:#d9d9d9"></div>
<div class="r" style="left:61px;top:436px;width:1318px;height:1px;background:#d9d9d9"></div>
<div class="r" style="left:35px;top:456px;width:25px;height:1px;background:#d9d9d9"></div>
<div class="r" style="left:61px;top:456px;width:1318px;height:1px;background:#d9d9d9"></div>
<div class="r" style="left:35px;top:476px;width:25px;height:1px;background:#d9d9d9"></div>
<div class="r" style="left:61px;top:476px;width:1318px;height:1px;background:#d9d9d9"></div>
<div class="r" style="left:35px;top:496px;width:25px;height:1px;background:#d9d9d9"></div>
<div class="r" style="left:61px;top:496px;width:1318px;height:1px;background:#d9d9d9"></div>
<div class="r" style="left:35px;top:516px;width:25px;height:1px;background:#d9d9d9"></div>
<div class="r" style="left:61px;top:516px;width:1318px;height:1px;background:#d9d9d9"></div>
<div class="r" style="left:35px;top:536px;width:25px;height:1px;background:#d9d9d9"></div>
<div class="r" style="left:61px;top:536px;width:1318px;height:1px;background:#d9d9d9"></div>
<div class="r" style="left:35px;top:556px;width:25px;height:1px;background:#d9d9d9"></div>
<div class="r" style="left:61px;top:556px;width:1318px;height:1px;background:#d9d9d9"></div>
<div class="r" style="left:35px;top:576px;width:25px;height:1px;background:#d9d9d9"></div>
<div class="r" style="left:61px;top:576px;width:1318px;height:1px;background:#d9d9d9"></div>
<div class="r" style="left:35px;top:596px;width:25px;height:1px;background:#d9d9d9"></div>
<div class="r" style="left:61px;top:596px;width:1318px;height:1px;background:#d9d9d9"></div>
<div class="r" style="left:35px;top:616px;width:25px;height:1px;background:#d9d9d9"></div>
<div class="r" style="left:61px;top:616px;width:1318px;height:1px;background:#d9d9d9"></div>
<div class="r" style="left:35px;top:636px;width:25px;height:1px;background:#d9d9d9"></div>
<div class="r" style="left:61px;top:636px;width:1318px;height:1px;background:#d9d9d9"></div>
<div class="r" style="left:35px;top:656px;width:25px;height:1px;background:#d9d9d9"></div>
<div class="r" style="left:61px;top:656px;width:1318px;height:1px;background:#d9d9d9"></div>
<div class="r" style="left:35px;top:676px;width:25px;height:1px;background:#d9d9d9"></div>
<div class="r" style="left:61px;top:676px;width:1318px;height:1px;background:#d9d9d9"></div>
<div class="r" style="left:35px;top:696px;width:25px;height:1px;background:#d9d9d9"></div>
<div class="r" style="left:61px;top:696px;width:1318px;height:1px;background:#d9d9d9"></div>
<div class="r" style="left:35px;top:716px;width:25px;height:1px;background:#d9d9d9"></div>
<div class="r" style="left:61px;top:716px;width:1318px;height:1px;background:#d9d9d9"></div>
<div class="r" style="left:35px;top:736px;width:25px;height:1px;background:#d9d9d9"></div>
<div class="r" style="left:61px;top:736px;width:1318px;height:1px;background:#d9d9d9"></div>
<div class="r" style="left:35px;top:756px;width:25px;height:1px;background:#d9d9d9"></div>
<div class="r" style="left:61px;top:756px;width:1318px;height:1px;background:#d9d9d9"></div>
<div class="r" style="left:35px;top:776px;width:25px;height:1px;background:#d9d9d9"></div>
<div class="r" style="left:61px;top:776px;width:1318px;height:1px;background:#d9d9d9"></div>
<div class="r" style="left:35px;top:796px;width:25px;height:1px;background:#d9d9d9"></div>
<div class="r" style="left:61px;top:796px;width:1318px;height:1px;background:#d9d9d9"></div>
<div class="r" style="left:137px;top:277px;width:1px;height:508px;background:#d9d9d9"></div>
<div class="r" style="left:214px;top:277px;width:1px;height:508px;background:#d9d9d9"></div>
<div class="r" style="left:291px;top:277px;width:1px;height:508px;background:#d9d9d9"></div>
<div class="r" style="left:368px;top:277px;width:1px;height:508px;background:#d9d9d9"></div>
<div class="r" style="left:445px;top:277px;width:1px;height:508px;background:#d9d9d9"></div>
<div class="r" style="left:522px;top:277px;width:1px;height:508px;background:#d9d9d9"></div>
<div class="r" style="left:599px;top:277px;width:1px;height:508px;background:#d9d9d9"></div>
<div class="r" style="left:676px;top:277px;width:1px;height:508px;background:#d9d9d9"></div>
<div class="r" style="left:740px;top:277px;width:1px;height:508px;background:#d9d9d9"></div>
<div class="r" style="left:804px;top:277px;width:1px;height:508px;background:#d9d9d9"></div>
<div class="r" style="left:868px;top:277px;width:1px;height:508px;background:#d9d9d9"></div>
<div class="r" style="left:932px;top:277px;width:1px;height:508px;background:#d9d9d9"></div>
<div class="r" style="left:996px;top:277px;width:1px;height:508px;background:#d9d9d9"></div>
<div class="r" style="left:1060px;top:277px;width:1px;height:508px;background:#d9d9d9"></div>
<div class="r" style="left:1124px;top:277px;width:1px;height:508px;background:#d9d9d9"></div>
<div class="r" style="left:1188px;top:277px;width:1px;height:508px;background:#d9d9d9"></div>
<div class="r" style="left:1252px;top:277px;width:1px;height:508px;background:#d9d9d9"></div>
<div class="r" style="left:1316px;top:277px;width:1px;height:508px;background:#d9d9d9"></div>
<div class="r" style="left:1379px;top:277px;width:1px;height:508px;background:#ababab"></div>
<div class="r" style="left:35px;top:597px;width:25px;height:19px;background:#e1e1e1"></div>
<div class="t" style="left:-52.5px;width:200px;text-align:center;top:281.89px;font-size:12.3px;line-height:12.3px;color:#444;">1</div>
<div class="t" style="left:-52.5px;width:200px;text-align:center;top:301.89px;font-size:12.3px;line-height:12.3px;color:#444;">2</div>
<div class="t" style="left:-52.5px;width:200px;text-align:center;top:321.89px;font-size:12.3px;line-height:12.3px;color:#444;">3</div>
<div class="t" style="left:-52.5px;width:200px;text-align:center;top:341.89px;font-size:12.3px;line-height:12.3px;color:#444;">4</div>
<div class="t" style="left:-52.5px;width:200px;text-align:center;top:361.89px;font-size:12.3px;line-height:12.3px;color:#444;">5</div>
<div class="t" style="left:-52.5px;width:200px;text-align:center;top:381.89px;font-size:12.3px;line-height:12.3px;color:#444;">6</div>
<div class="t" style="left:-52.5px;width:200px;text-align:center;top:401.89px;font-size:12.3px;line-height:12.3px;color:#444;">7</div>
<div class="t" style="left:-52.5px;width:200px;text-align:center;top:421.89px;font-size:12.3px;line-height:12.3px;color:#444;">8</div>
<div class="t" style="left:-52.5px;width:200px;text-align:center;top:441.89px;font-size:12.3px;line-height:12.3px;color:#444;">9</div>
<div class="t" style="left:-52.5px;width:200px;text-align:center;top:461.89px;font-size:12.3px;line-height:12.3px;color:#444;">10</div>
<div class="t" style="left:-52.5px;width:200px;text-align:center;top:481.89px;font-size:12.3px;line-height:12.3px;color:#444;">11</div>
<div class="t" style="left:-52.5px;width:200px;text-align:center;top:501.89px;font-size:12.3px;line-height:12.3px;color:#444;">12</div>
<div class="t" style="left:-52.5px;width:200px;text-align:center;top:521.89px;font-size:12.3px;line-height:12.3px;color:#444;">13</div>
<div class="t" style="left:-52.5px;width:200px;text-align:center;top:541.89px;font-size:12.3px;line-height:12.3px;color:#444;">14</div>
<div class="t" style="left:-52.5px;width:200px;text-align:center;top:561.89px;font-size:12.3px;line-height:12.3px;color:#444;">15</div>
<div class="t" style="left:-52.5px;width:200px;text-align:center;top:581.89px;font-size:12.3px;line-height:12.3px;color:#444;">16</div>
<div class="t" style="left:-52.5px;width:200px;text-align:center;top:601.89px;font-size:12.3px;line-height:12.3px;color:#217346;font-weight:bold;">17</div>
<div class="t" style="left:-52.5px;width:200px;text-align:center;top:621.89px;font-size:12.3px;line-height:12.3px;color:#444;">18</div>
<div class="t" style="left:-52.5px;width:200px;text-align:center;top:641.89px;font-size:12.3px;line-height:12.3px;color:#444;">19</div>
<div class="t" style="left:-52.5px;width:200px;text-align:center;top:661.89px;font-size:12.3px;line-height:12.3px;color:#444;">20</div>
<div class="t" style="left:-52.5px;width:200px;text-align:center;top:681.89px;font-size:12.3px;line-height:12.3px;color:#444;">21</div>
<div class="t" style="left:-52.5px;width:200px;text-align:center;top:701.89px;font-size:12.3px;line-height:12.3px;color:#444;">22</div>
<div class="t" style="left:-52.5px;width:200px;text-align:center;top:721.89px;font-size:12.3px;line-height:12.3px;color:#444;">23</div>
<div class="t" style="left:-52.5px;width:200px;text-align:center;top:741.89px;font-size:12.3px;line-height:12.3px;color:#444;">24</div>
<div class="t" style="left:-52.5px;width:200px;text-align:center;top:761.89px;font-size:12.3px;line-height:12.3px;color:#444;">25</div>
<div class="t" style="left:-52.5px;width:200px;text-align:center;top:781.89px;font-size:12.3px;line-height:12.3px;color:#444;">26</div>
<div class="r" style="left:61px;top:296px;width:384px;height:21px;background:#fce4d6"></div>
<div class="r" style="left:61px;top:336px;width:384px;height:21px;background:#fce4d6"></div>
<div class="r" style="left:61px;top:376px;width:384px;height:21px;background:#fce4d6"></div>
<div class="r" style="left:61px;top:416px;width:384px;height:21px;background:#fce4d6"></div>
<div class="r" style="left:61px;top:456px;width:384px;height:21px;background:#fce4d6"></div>
<div class="r" style="left:61px;top:496px;width:384px;height:21px;background:#fce4d6"></div>
<div class="r" style="left:61px;top:536px;width:384px;height:21px;background:#fce4d6"></div>
<div class="r" style="left:61px;top:576px;width:384px;height:21px;background:#fce4d6"></div>
<div class="r" style="left:61px;top:296px;width:384px;height:1px;background:#ee8a4f"></div>
<div class="r" style="left:61px;top:596px;width:384px;height:1px;background:#ee8a4f"></div>
<div class="t" style="left:63px;top:281.03px;font-size:12.6px;line-height:12.6px;color:#c65911;font-weight:bold;">Column1</div>
<div class="r" style="left:120px;top:278px;width:17px;height:17px;border:1px solid #ababab;box-sizing:border-box;background:linear-gradient(#fdfdfd,#eef0f4)"></div>
<svg class="r" style="left:124px;top:284px" width="9" height="5" viewBox="0 0 9 5"><path d="M0 0h8l-4 4.5z" fill="#555"/></svg>
<div class="t" style="left:140px;top:281.03px;font-size:12.6px;line-height:12.6px;color:#c65911;font-weight:bold;">Column2</div>
<div class="r" style="left:197px;top:278px;width:17px;height:17px;border:1px solid #ababab;box-sizing:border-box;background:linear-gradient(#fdfdfd,#eef0f4)"></div>
<svg class="r" style="left:201px;top:284px" width="9" height="5" viewBox="0 0 9 5"><path d="M0 0h8l-4 4.5z" fill="#555"/></svg>
<div class="t" style="left:217px;top:281.03px;font-size:12.6px;line-height:12.6px;color:#c65911;font-weight:bold;">Column3</div>
<div class="r" style="left:274px;top:278px;width:17px;height:17px;border:1px solid #ababab;box-sizing:border-box;background:linear-gradient(#fdfdfd,#eef0f4)"></div>
<svg class="r" style="left:278px;top:284px" width="9" height="5" viewBox="0 0 9 5"><path d="M0 0h8l-4 4.5z" fill="#555"/></svg>
<div class="t" style="left:294px;top:281.03px;font-size:12.6px;line-height:12.6px;color:#c65911;font-weight:bold;">Column4</div>
<div class="r" style="left:351px;top:278px;width:17px;height:17px;border:1px solid #ababab;box-sizing:border-box;background:linear-gradient(#fdfdfd,#eef0f4)"></div>
<svg class="r" style="left:355px;top:284px" width="9" height="5" viewBox="0 0 9 5"><path d="M0 0h8l-4 4.5z" fill="#555"/></svg>
<div class="t" style="left:371px;top:281.03px;font-size:12.6px;line-height:12.6px;color:#c65911;font-weight:bold;">Column5</div>
<div class="r" style="left:428px;top:278px;width:17px;height:17px;border:1px solid #ababab;box-sizing:border-box;background:linear-gradient(#fdfdfd,#eef0f4)"></div>
<svg class="r" style="left:432px;top:284px" width="9" height="5" viewBox="0 0 9 5"><path d="M0 0h8l-4 4.5z" fill="#555"/></svg>
<div class="r" style="left:59px;top:595px;width:80px;height:23px;border:2px solid #217346;box-sizing:border-box"></div>
<div class="r" style="left:135px;top:614px;width:5px;height:5px;background:#217346;outline:1px solid #fff"></div>
<div class="r" style="left:1380px;top:257px;width:21px;height:528px;background:#fff"></div>
<div class="r" style="left:1383px;top:259px;width:15px;height:15px;border:1px solid #ababab;box-sizing:border-box;background:#fff"></div>
<svg class="r" style="left:1386px;top:264px" width="9" height="5" viewBox="0 0 9 5"><path d="M0 4.5h8l-4-4.5z" fill="#777"/></svg>
<div class="r" style="left:1383px;top:274px;width:15px;height:477px;border:1px solid #ababab;border-top:2px solid #ababab;box-sizing:border-box;background:#fff"></div>
<div class="r" style="left:1383px;top:751px;width:15px;height:20px;background:#f0f0f0"></div>
<div class="r" style="left:1383px;top:771px;width:15px;height:15px;border:1px solid #ababab;box-sizing:border-box;background:#fff"></div>
<svg class="r" style="left:1386px;top:776px" width="9" height="5" viewBox="0 0 9 5"><path d="M0 0h8l-4 4.5z" fill="#777"/></svg>
<div class="r" style="left:35px;top:785px;width:1345px;height:1px;background:#ababab"></div>
<div class="r" style="left:35px;top:786px;width:1366px;height:27px;background:#f3f3f3"></div>
<div class="r" style="left:35px;top:785px;width:1345px;height:1px;background:#ababab"></div>
<svg class="r" style="left:63px;top:795px" width="6" height="9" viewBox="0 0 6 9"><path d="M5 0v8L0.5 4z" fill="#c6c6c6"/></svg>
<svg class="r" style="left:90px;top:795px" width="6" height="9" viewBox="0 0 6 9"><path d="M0.5 0v8L5 4z" fill="#c6c6c6"/></svg>
<div class="r" style="left:135px;top:785px;width:65px;height:24px;background:#fff;border:1px solid #ababab;border-top:none;box-sizing:border-box"></div>
<div class="r" style="left:135px;top:807px;width:65px;height:3px;background:#217346"></div>
<div class="t" style="left:67.5px;width:200px;text-align:center;top:792.33px;font-size:12.6px;line-height:12.6px;color:#217346;font-weight:bold;">Sheet1</div>
<svg class="r" style="left:231px;top:789px" width="18" height="18" viewBox="0 0 18 18"><circle cx="9" cy="9" r="7.5" fill="none" stroke="#666" stroke-width="1.2"/><path d="M9 5v8M5 9h8" stroke="#555" stroke-width="1.8"/></svg>
<div class="r" style="left:854px;top:795px;width:2px;height:2px;background:#999"></div>
<div class="r" style="left:854px;top:799px;width:2px;height:2px;background:#999"></div>
<div class="r" style="left:854px;top:803px;width:2px;height:2px;background:#999"></div>
<div class="r" style="left:871px;top:792px;width:15px;height:15px;border:1px solid #ababab;box-sizing:border-box;background:#fff"></div>
<svg class="r" style="left:875px;top:795px" width="6" height="9" viewBox="0 0 6 9"><path d="M5 0v8L0.5 4z" fill="#666"/></svg>
<div class="r" style="left:886px;top:792px;width:452px;height:15px;border:1px solid #ababab;border-left:2px solid #ababab;box-sizing:border-box;background:#fff"></div>
<div class="r" style="left:1338px;top:792px;width:27px;height:15px;background:#e6e6e6"></div>
<div class="r" style="left:1365px;top:792px;width:15px;height:15px;border:1px solid #ababab;box-sizing:border-box;background:#fff"></div>
<svg class="r" style="left:1370px;top:795px" width="6" height="9" viewBox="0 0 6 9"><path d="M0.5 0v8L5 4z" fill="#666"/></svg>
<div class="r" style="left:35px;top:813px;width:1366px;height:21px;background:#217346"></div>
<div class="r" style="left:35px;top:834px;width:1366px;height:1px;background:#1b2622"></div>
<div class="r" style="left:35px;top:835px;width:1366px;height:1px;background:#8fa8b0"></div>
<div class="t" style="left:42px;top:819.20px;font-size:10.4px;line-height:10.4px;color:#ffffff;letter-spacing:-0.3px;">READY</div>
<div class="t" style="left:94px;top:819.20px;font-size:10.4px;line-height:10.4px;color:#ffffff;letter-spacing:-0.3px;">SCROLL LOCK</div>
<div class="r" style="left:1109px;top:813px;width:38px;height:21px;background:#0e6433"></div>
<svg class="r" style="left:1120px;top:816px" width="16" height="15" viewBox="0 0 16 15"><rect x="0.75" y="0.75" width="14" height="13" fill="none" stroke="#fff" stroke-width="1.5"/><path d="M5.5 1v13M10 1v13M1 5h14M1 9.5h14" stroke="#fff" stroke-width="1.3"/></svg>
<svg class="r" style="left:1158px;top:816px" width="15" height="15" viewBox="0 0 15 15"><rect x="0.75" y="0.75" width="13.5" height="13.5" fill="none" stroke="#fff" stroke-width="1.3"/><rect x="3.5" y="3.5" width="8" height="8" fill="none" stroke="#fff"/><path d="M5 6h5M5 8h5M5 10h5" stroke="#fff"/></svg>
<svg class="r" style="left:1196px;top:816px" width="15" height="15" viewBox="0 0 15 15"><rect x="0.75" y="0.75" width="13.5" height="13.5" fill="none" stroke="#fff" stroke-width="1.3"/><rect x="2" y="1" width="3" height="7" fill="#fff"/><rect x="7" y="1" width="2" height="7" fill="#fff"/><path d="M1 8.5h7" stroke="#fff"/></svg>
<div class="r" style="left:1228px;top:822px;width:6px;height:2px;background:#fff"></div>
<div class="r" style="left:1238px;top:823px;width:100px;height:1px;background:#fff"></div>
<div class="r" style="left:1286px;top:818px;width:4px;height:11px;background:#fff"></div>
<svg class="r" style="left:1342px;top:818px" width="9" height="10" viewBox="0 0 9 10"><path d="M4.5 1v8M0.5 5h8" stroke="#fff" stroke-width="2"/></svg>
<div class="t" style="left:1365px;top:818.86px;font-size:10.8px;line-height:10.8px;color:#ffffff;letter-spacing:-0.2px;">100%</div>
<div class="r" style="left:35px;top:836px;width:1366px;height:4px;background:#b4b4b4"></div>
<div class="r" style="left:35px;top:836px;width:1053px;height:4px;background:#ff6b2b"></div>
<div class="r" style="left:35px;top:840px;width:1366px;height:33px;background:#e8e8e8"></div>
<svg class="r" style="left:49px;top:849px" width="15" height="17" viewBox="0 0 15 17"><path d="M0 0L14.5 8.5L0 17Z" fill="#9a9a9a"/></svg>
<svg class="r" style="left:80px;top:847px" width="20" height="21" viewBox="0 0 20 21"><path d="M6.8 3.8A7 7 0 1 0 10.5 3.4" fill="none" stroke="#9a9a9a" stroke-width="2.4"/><path d="M9.5 0.5L6 4L10.5 6.5Z" fill="#9a9a9a"/><text x="9.8" y="14.3" text-anchor="middle" font-size="7.8" font-weight="bold" fill="#9a9a9a" font-family="Liberation Sans" letter-spacing="-0.4">10</text></svg>
<svg class="r" style="left:114px;top:849px" width="15" height="17" viewBox="0 0 15 17"><path d="M0 0H9L14 5V17H0Z" fill="#9a9a9a"/><path d="M9.8 0.5V4.2H13.5" fill="#d0d0d0"/><path d="M3.5 8.5h7M3.5 11h7M3.5 13.5h7" stroke="#e8e8e8" stroke-width="1.1"/></svg>
<svg class="r" style="left:143px;top:850px" width="20" height="15" viewBox="0 0 20 15"><path d="M0 4.5H4L9.5 0V15L4 10.5H0Z" fill="#9a9a9a"/><path d="M12 5q2 2.5 0 5M14.5 3q3.5 4.5 0 9M17 1q5 6.5 0 13" fill="none" stroke="#9a9a9a" stroke-width="1.3"/></svg>
<div class="r" style="left:179px;top:856px;width:89px;height:3px;background:#7fb5d5;border-radius:1.5px"></div>
<div class="r" style="left:267px;top:851px;width:11px;height:11px;background:linear-gradient(#e6e6e6,#c4c4c4);border:1px solid #9a9a9a;box-sizing:border-box"></div>
<svg class="r" style="left:697px;top:846px" width="76" height="18" viewBox="0 0 76 18"><g fill="none" stroke="#a6a6a6" stroke-width="1.35" transform="translate(0,1)"><path d="M1.2 0.3V15.5H10"/><circle cx="15.6" cy="10.1" r="5.5"/><path d="M21.1 4.5V15.8"/><path d="M32.2 2.8C30.8 1 29 0.3 27.3 0.3C24.6 0.3 23.2 2 23.2 4C23.2 8.6 33 7.2 33 11.6C33 14 31 15.7 28 15.7C25.6 15.7 23.6 14.5 22.6 12.8"/><path d="M37 0V15.8M44.6 4.4L37.2 11.2M40 8.8L45.2 15.8"/><circle cx="52.4" cy="10.1" r="5.3"/><path d="M59.6 0V15.8"/><circle cx="66.9" cy="10.1" r="5.5"/><path d="M72.4 4.5V15.8"/></g></svg>
<svg class="r" style="left:667px;top:843px" width="26" height="27" viewBox="0 0 26 27"><g fill="none" stroke="#a6a6a6" stroke-width="1.3"><path d="M7 1H18L23 5.5V9H17M23 13V18L18 22H14M10 22H7L2 18V13H7M2 9V5.5L7 1"/><path d="M9.5 4V22M13.5 4V22M9.5 4H20M5 9H9.5M5 13H9.5M13.5 13H20V17H17M13.5 22H17"/><path d="M8 25H17"/></g></svg>
<svg class="r" style="left:1279px;top:846px" width="20" height="20" viewBox="0 0 20 20"><circle cx="10" cy="10" r="8.5" fill="none" stroke="#b0b0b0" stroke-width="2"/><path d="M10 4.5V10.5L13.5 13" fill="none" stroke="#b0b0b0" stroke-width="2"/></svg>
<div class="t" style="left:1305px;top:847.42px;font-size:19px;line-height:19px;color:#b4b4b4;font-weight:bold;font-family:Liberation Serif,serif;letter-spacing:1.2px;">02:13</div>
<svg class="r" style="left:1374px;top:849px" width="18" height="17" viewBox="0 0 18 17"><path d="M1 5V1H5M13 1H17V5M17 12V16H13M5 16H1V12" fill="none" stroke="#a0a0a0" stroke-width="2"/></svg>
<div class="r" style="left:414px;top:223px;width:610px;height:388px;border-radius:7px 7px 5px 5px;box-shadow:2px 5px 12px 4px rgba(0,0,0,0.6)"></div>
<div class="r" style="left:414px;top:223px;width:610px;height:388px;border:1px solid #3b3f45;border-radius:7px 7px 5px 5px;box-sizing:border-box;background:linear-gradient(180deg,#d8e9fa 0px,#bddbf9 4px,#b6d6f8 28px,#b9d8f8 100%)"></div>
<div class="r" style="left:415px;top:224px;width:120px;height:28px;background:linear-gradient(90deg,rgba(255,255,255,0.45),rgba(255,255,255,0))"></div>
<div class="r" style="left:860px;top:224px;width:80px;height:28px;background:linear-gradient(90deg,rgba(255,255,255,0),rgba(255,255,255,0.3))"></div>
<div class="r" style="left:415px;top:252px;width:6px;height:352px;background:linear-gradient(#e2eaf2 0px,#e6eef6 70px,#b4d2f2 95px,#c4dcf5 180px,#b6d5f6 260px,#bcd9f7 352px)"></div>
<div class="r" style="left:1017px;top:252px;width:6px;height:352px;background:linear-gradient(#c9def4 0px,#c9def4 90px,#b9d7f6 110px,#b9d8f8 352px)"></div>
<div class="t" style="left:423px;top:232.10px;font-size:11.69px;line-height:11.69px;color:#000;">New Table Style</div>
<div class="r" style="left:941px;top:223px;width:29px;height:20px;border:1px solid #4a5566;border-top:none;border-radius:0 0 0 5px;box-sizing:border-box;background:linear-gradient(#e4ecf5 0%,#d4dfeb 45%,#aebdd0 50%,#c0d0e2 100%)"></div>
<svg class="r" style="left:949px;top:226px" width="14" height="15" viewBox="0 0 14 15"><text x="7" y="12.5" text-anchor="middle" font-size="14" font-weight="bold" font-family="Liberation Sans" fill="#fff" stroke="#3a4350" stroke-width="2.2" paint-order="stroke">?</text></svg>
<div class="r" style="left:969px;top:223px;width:48px;height:20px;border:1px solid #4a1a14;border-top:none;border-left:1px solid #6b2a20;border-radius:0 0 5px 0;box-sizing:border-box;background:linear-gradient(#e8a496 0%,#d97766 45%,#c6412b 55%,#d5624b 100%)"></div>
<svg class="r" style="left:986px;top:227px" width="14" height="13" viewBox="0 0 14 13"><path d="M2.5 2.5L11.5 10.5M11.5 2.5L2.5 10.5" stroke="#4a1a12" stroke-width="4" stroke-linecap="round"/><path d="M2.5 2.5L11.5 10.5M11.5 2.5L2.5 10.5" stroke="#fff" stroke-width="2.2" stroke-linecap="round"/></svg>
<div class="r" style="left:421px;top:252px;width:596px;height:352px;background:#f0f0f0;border:1px solid #5a6a7a;box-sizing:border-box"></div>
<div class="t" style="left:429px;top:261.86px;font-size:10.8px;line-height:10.8px;color:#000;"><u>N</u>ame:</div>
<div class="r" style="left:471px;top:260px;width:539px;height:20px;border:1px solid #abadb3;box-sizing:border-box;background:#fff"></div>
<div class="r" style="left:474px;top:263px;width:63px;height:14px;background:#99c9ef"></div>
<div class="t" style="left:474px;top:265.69px;font-size:11px;line-height:11px;color:#000;">Table Style 1</div>
<div class="r" style="left:429px;top:290px;width:451px;height:168px;border:1px solid #d5dfe5;border-radius:3px;box-sizing:border-box"></div>
<div class="r" style="left:435px;top:284px;width:77px;height:12px;background:#f0f0f0"></div>
<div class="t" style="left:437px;top:284.10px;font-size:11.1px;line-height:11.1px;color:#000;"><u>T</u>able Element:</div>
<div class="r" style="left:439px;top:303px;width:431px;height:121px;border:1px solid #828790;box-sizing:border-box;background:#fff"></div>
<div class="r" style="left:441px;top:305px;width:410px;height:13px;background:#dedee2"></div>
<div class="t" style="left:442px;top:306.95px;font-size:11.4px;line-height:11.4px;color:#000;">Whole Table</div>
<div class="t" style="left:442px;top:319.95px;font-size:11.4px;line-height:11.4px;color:#000;">First Column Stripe</div>
<div class="t" style="left:442px;top:332.95px;font-size:11.4px;line-height:11.4px;color:#000;">Second Column Stripe</div>
<div class="t" style="left:442px;top:345.95px;font-size:11.4px;line-height:11.4px;color:#000;">First Row Stripe</div>
<div class="t" style="left:442px;top:358.95px;font-size:11.4px;line-height:11.4px;color:#000;">Second Row Stripe</div>
<div class="t" style="left:442px;top:371.95px;font-size:11.4px;line-height:11.4px;color:#000;">Last Column</div>
<div class="t" style="left:442px;top:384.95px;font-size:11.4px;line-height:11.4px;color:#000;">First Column</div>
<div class="t" style="left:442px;top:397.95px;font-size:11.4px;line-height:11.4px;color:#000;">Header Row</div>
<div class="t" style="left:442px;top:410.95px;font-size:11.4px;line-height:11.4px;color:#000;">Total Row</div>
<div class="r" style="left:852px;top:304px;width:17px;height:119px;background:linear-gradient(90deg,#e6e6e6,#f4f4f4 40%,#f0f0f0)"></div>
<svg class="r" style="left:856px;top:310px" width="9" height="5" viewBox="0 0 9 5"><path d="M0 4.5h8l-4-4.5z" fill="#333"/></svg>
<div class="r" style="left:852px;top:324px;width:15px;height:54px;border:1px solid #979797;border-radius:2px;box-sizing:border-box;background:linear-gradient(90deg,#f3f3f3,#e2e2e2 55%,#cfcfcf)"></div>
<svg class="r" style="left:855px;top:346px" width="8" height="8" viewBox="0 0 8 8"><path d="M0.5 1h7M0.5 3.5h7M0.5 6h7" stroke="#555"/></svg>
<svg class="r" style="left:856px;top:411px" width="9" height="5" viewBox="0 0 9 5"><path d="M0 0h8l-4 4.5z" fill="#333"/></svg>
<div class="r" style="left:595px;top:428px;width:54px;height:21px;border:1px solid #707070;border-radius:3px;box-sizing:border-box;background:linear-gradient(#f2f2f2 0%,#ebebeb 50%,#dddddd 51%,#cfcfcf 100%)"></div>
<div class="t" style="left:522px;width:200px;text-align:center;top:433.10px;font-size:11.69px;line-height:11.69px;color:#000;"><u>F</u>ormat</div>
<div class="r" style="left:660px;top:428px;width:54px;height:21px;border:1px solid #adb2b5;border-radius:3px;box-sizing:border-box;background:#f4f4f4"></div>
<div class="t" style="left:587px;width:200px;text-align:center;top:433.10px;font-size:11.69px;line-height:11.69px;color:#a0a0a0;"><u>C</u>lear</div>
<div class="r" style="left:890px;top:290px;width:120px;height:112px;border:1px solid #d5dfe5;border-radius:3px;box-sizing:border-box"></div>
<div class="r" style="left:896px;top:284px;width:46px;height:12px;background:#f0f0f0"></div>
<div class="t" style="left:899.5px;top:284.77px;font-size:10.9px;line-height:10.9px;color:#000;">Preview</div>
<div class="r" style="left:904px;top:303px;width:91px;height:85px;background:#fff"></div>
<svg class="r" style="left:904px;top:303px" width="91" height="85" viewBox="0 0 91 85"><path transform="translate(4.5,5.0)" d="M0 1.5L1.3 0L2.6 1.5L1.3 3ZM2.6 1.5L3.9 0L5.2 1.5L3.9 3ZM5.2 1.5L6.5 0L7.8 1.5L6.5 3Z" fill="none" stroke="#222" stroke-width="0.8"/><path transform="translate(19.5,5.0)" d="M0 1.5L1.3 0L2.6 1.5L1.3 3ZM2.6 1.5L3.9 0L5.2 1.5L3.9 3ZM5.2 1.5L6.5 0L7.8 1.5L6.5 3Z" fill="none" stroke="#222" stroke-width="0.8"/><path transform="translate(34.5,5.0)" d="M0 1.5L1.3 0L2.6 1.5L1.3 3ZM2.6 1.5L3.9 0L5.2 1.5L3.9 3ZM5.2 1.5L6.5 0L7.8 1.5L6.5 3Z" fill="none" stroke="#222" stroke-width="0.8"/><path transform="translate(49.5,5.0)" d="M0 1.5L1.3 0L2.6 1.5L1.3 3ZM2.6 1.5L3.9 0L5.2 1.5L3.9 3ZM5.2 1.5L6.5 0L7.8 1.5L6.5 3Z" fill="none" stroke="#222" stroke-width="0.8"/><path transform="translate(64.5,5.0)" d="M0 1.5L1.3 0L2.6 1.5L1.3 3ZM2.6 1.5L3.9 0L5.2 1.5L3.9 3ZM5.2 1.5L6.5 0L7.8 1.5L6.5 3Z" fill="none" stroke="#222" stroke-width="0.8"/><path transform="translate(79.5,5.0)" d="M0 1.5L1.3 0L2.6 1.5L1.3 3ZM2.6 1.5L3.9 0L5.2 1.5L3.9 3ZM5.2 1.5L6.5 0L7.8 1.5L6.5 3Z" fill="none" stroke="#222" stroke-width="0.8"/><path transform="translate(4.5,16.9)" d="M0 1.5L1.3 0L2.6 1.5L1.3 3ZM2.6 1.5L3.9 0L5.2 1.5L3.9 3ZM5.2 1.5L6.5 0L7.8 1.5L6.5 3Z" fill="none" stroke="#222" stroke-width="0.8"/><path transform="translate(19.5,16.9)" d="M0 1.5L1.3 0L2.6 1.5L1.3 3ZM2.6 1.5L3.9 0L5.2 1.5L3.9 3ZM5.2 1.5L6.5 0L7.8 1.5L6.5 3Z" fill="none" stroke="#222" stroke-width="0.8"/><path transform="translate(34.5,16.9)" d="M0 1.5L1.3 0L2.6 1.5L1.3 3ZM2.6 1.5L3.9 0L5.2 1.5L3.9 3ZM5.2 1.5L6.5 0L7.8 1.5L6.5 3Z" fill="none" stroke="#222" stroke-width="0.8"/><path transform="translate(49.5,16.9)" d="M0 1.5L1.3 0L2.6 1.5L1.3 3ZM2.6 1.5L3.9 0L5.2 1.5L3.9 3ZM5.2 1.5L6.5 0L7.8 1.5L6.5 3Z" fill="none" stroke="#222" stroke-width="0.8"/><path transform="translate(64.5,16.9)" d="M0 1.5L1.3 0L2.6 1.5L1.3 3ZM2.6 1.5L3.9 0L5.2 1.5L3.9 3ZM5.2 1.5L6.5 0L7.8 1.5L6.5 3Z" fill="none" stroke="#222" stroke-width="0.8"/><path transform="translate(79.5,16.9)" d="M0 1.5L1.3 0L2.6 1.5L1.3 3ZM2.6 1.5L3.9 0L5.2 1.5L3.9 3ZM5.2 1.5L6.5 0L7.8 1.5L6.5 3Z" fill="none" stroke="#222" stroke-width="0.8"/><path transform="translate(4.5,28.9)" d="M0 1.5L1.3 0L2.6 1.5L1.3 3ZM2.6 1.5L3.9 0L5.2 1.5L3.9 3ZM5.2 1.5L6.5 0L7.8 1.5L6.5 3Z" fill="none" stroke="#222" stroke-width="0.8"/><path transform="translate(19.5,28.9)" d="M0 1.5L1.3 0L2.6 1.5L1.3 3ZM2.6 1.5L3.9 0L5.2 1.5L3.9 3ZM5.2 1.5L6.5 0L7.8 1.5L6.5 3Z" fill="none" stroke="#222" stroke-width="0.8"/><path transform="translate(34.5,28.9)" d="M0 1.5L1.3 0L2.6 1.5L1.3 3ZM2.6 1.5L3.9 0L5.2 1.5L3.9 3ZM5.2 1.5L6.5 0L7.8 1.5L6.5 3Z" fill="none" stroke="#222" stroke-width="0.8"/><path transform="translate(49.5,28.9)" d="M0 1.5L1.3 0L2.6 1.5L1.3 3ZM2.6 1.5L3.9 0L5.2 1.5L3.9 3ZM5.2 1.5L6.5 0L7.8 1.5L6.5 3Z" fill="none" stroke="#222" stroke-width="0.8"/><path transform="translate(64.5,28.9)" d="M0 1.5L1.3 0L2.6 1.5L1.3 3ZM2.6 1.5L3.9 0L5.2 1.5L3.9 3ZM5.2 1.5L6.5 0L7.8 1.5L6.5 3Z" fill="none" stroke="#222" stroke-width="0.8"/><path transform="translate(79.5,28.9)" d="M0 1.5L1.3 0L2.6 1.5L1.3 3ZM2.6 1.5L3.9 0L5.2 1.5L3.9 3ZM5.2 1.5L6.5 0L7.8 1.5L6.5 3Z" fill="none" stroke="#222" stroke-width="0.8"/><path transform="translate(4.5,40.9)" d="M0 1.5L1.3 0L2.6 1.5L1.3 3ZM2.6 1.5L3.9 0L5.2 1.5L3.9 3ZM5.2 1.5L6.5 0L7.8 1.5L6.5 3Z" fill="none" stroke="#222" stroke-width="0.8"/><path transform="translate(19.5,40.9)" d="M0 1.5L1.3 0L2.6 1.5L1.3 3ZM2.6 1.5L3.9 0L5.2 1.5L3.9 3ZM5.2 1.5L6.5 0L7.8 1.5L6.5 3Z" fill="none" stroke="#222" stroke-width="0.8"/><path transform="translate(34.5,40.9)" d="M0 1.5L1.3 0L2.6 1.5L1.3 3ZM2.6 1.5L3.9 0L5.2 1.5L3.9 3ZM5.2 1.5L6.5 0L7.8 1.5L6.5 3Z" fill="none" stroke="#222" stroke-width="0.8"/><path transform="translate(49.5,40.9)" d="M0 1.5L1.3 0L2.6 1.5L1.3 3ZM2.6 1.5L3.9 0L5.2 1.5L3.9 3ZM5.2 1.5L6.5 0L7.8 1.5L6.5 3Z" fill="none" stroke="#222" stroke-width="0.8"/><path transform="translate(64.5,40.9)" d="M0 1.5L1.3 0L2.6 1.5L1.3 3ZM2.6 1.5L3.9 0L5.2 1.5L3.9 3ZM5.2 1.5L6.5 0L7.8 1.5L6.5 3Z" fill="none" stroke="#222" stroke-width="0.8"/><path transform="translate(79.5,40.9)" d="M0 1.5L1.3 0L2.6 1.5L1.3 3ZM2.6 1.5L3.9 0L5.2 1.5L3.9 3ZM5.2 1.5L6.5 0L7.8 1.5L6.5 3Z" fill="none" stroke="#222" stroke-width="0.8"/><path transform="translate(4.5,52.8)" d="M0 1.5L1.3 0L2.6 1.5L1.3 3ZM2.6 1.5L3.9 0L5.2 1.5L3.9 3ZM5.2 1.5L6.5 0L7.8 1.5L6.5 3Z" fill="none" stroke="#222" stroke-width="0.8"/><path transform="translate(19.5,52.8)" d="M0 1.5L1.3 0L2.6 1.5L1.3 3ZM2.6 1.5L3.9 0L5.2 1.5L3.9 3ZM5.2 1.5L6.5 0L7.8 1.5L6.5 3Z" fill="none" stroke="#222" stroke-width="0.8"/><path transform="translate(34.5,52.8)" d="M0 1.5L1.3 0L2.6 1.5L1.3 3ZM2.6 1.5L3.9 0L5.2 1.5L3.9 3ZM5.2 1.5L6.5 0L7.8 1.5L6.5 3Z" fill="none" stroke="#222" stroke-width="0.8"/><path transform="translate(49.5,52.8)" d="M0 1.5L1.3 0L2.6 1.5L1.3 3ZM2.6 1.5L3.9 0L5.2 1.5L3.9 3ZM5.2 1.5L6.5 0L7.8 1.5L6.5 3Z" fill="none" stroke="#222" stroke-width="0.8"/><path transform="translate(64.5,52.8)" d="M0 1.5L1.3 0L2.6 1.5L1.3 3ZM2.6 1.5L3.9 0L5.2 1.5L3.9 3ZM5.2 1.5L6.5 0L7.8 1.5L6.5 3Z" fill="none" stroke="#222" stroke-width="0.8"/><path transform="translate(79.5,52.8)" d="M0 1.5L1.3 0L2.6 1.5L1.3 3ZM2.6 1.5L3.9 0L5.2 1.5L3.9 3ZM5.2 1.5L6.5 0L7.8 1.5L6.5 3Z" fill="none" stroke="#222" stroke-width="0.8"/><path transform="translate(4.5,64.8)" d="M0 1.5L1.3 0L2.6 1.5L1.3 3ZM2.6 1.5L3.9 0L5.2 1.5L3.9 3ZM5.2 1.5L6.5 0L7.8 1.5L6.5 3Z" fill="none" stroke="#222" stroke-width="0.8"/><path transform="translate(19.5,64.8)" d="M0 1.5L1.3 0L2.6 1.5L1.3 3ZM2.6 1.5L3.9 0L5.2 1.5L3.9 3ZM5.2 1.5L6.5 0L7.8 1.5L6.5 3Z" fill="none" stroke="#222" stroke-width="0.8"/><path transform="translate(34.5,64.8)" d="M0 1.5L1.3 0L2.6 1.5L1.3 3ZM2.6 1.5L3.9 0L5.2 1.5L3.9 3ZM5.2 1.5L6.5 0L7.8 1.5L6.5 3Z" fill="none" stroke="#222" stroke-width="0.8"/><path transform="translate(49.5,64.8)" d="M0 1.5L1.3 0L2.6 1.5L1.3 3ZM2.6 1.5L3.9 0L5.2 1.5L3.9 3ZM5.2 1.5L6.5 0L7.8 1.5L6.5 3Z" fill="none" stroke="#222" stroke-width="0.8"/><path transform="translate(64.5,64.8)" d="M0 1.5L1.3 0L2.6 1.5L1.3 3ZM2.6 1.5L3.9 0L5.2 1.5L3.9 3ZM5.2 1.5L6.5 0L7.8 1.5L6.5 3Z" fill="none" stroke="#222" stroke-width="0.8"/><path transform="translate(79.5,64.8)" d="M0 1.5L1.3 0L2.6 1.5L1.3 3ZM2.6 1.5L3.9 0L5.2 1.5L3.9 3ZM5.2 1.5L6.5 0L7.8 1.5L6.5 3Z" fill="none" stroke="#222" stroke-width="0.8"/><path transform="translate(4.5,76.7)" d="M0 1.5L1.3 0L2.6 1.5L1.3 3ZM2.6 1.5L3.9 0L5.2 1.5L3.9 3ZM5.2 1.5L6.5 0L7.8 1.5L6.5 3Z" fill="none" stroke="#222" stroke-width="0.8"/><path transform="translate(19.5,76.7)" d="M0 1.5L1.3 0L2.6 1.5L1.3 3ZM2.6 1.5L3.9 0L5.2 1.5L3.9 3ZM5.2 1.5L6.5 0L7.8 1.5L6.5 3Z" fill="none" stroke="#222" stroke-width="0.8"/><path transform="translate(34.5,76.7)" d="M0 1.5L1.3 0L2.6 1.5L1.3 3ZM2.6 1.5L3.9 0L5.2 1.5L3.9 3ZM5.2 1.5L6.5 0L7.8 1.5L6.5 3Z" fill="none" stroke="#222" stroke-width="0.8"/><path transform="translate(49.5,76.7)" d="M0 1.5L1.3 0L2.6 1.5L1.3 3ZM2.6 1.5L3.9 0L5.2 1.5L3.9 3ZM5.2 1.5L6.5 0L7.8 1.5L6.5 3Z" fill="none" stroke="#222" stroke-width="0.8"/><path transform="translate(64.5,76.7)" d="M0 1.5L1.3 0L2.6 1.5L1.3 3ZM2.6 1.5L3.9 0L5.2 1.5L3.9 3ZM5.2 1.5L6.5 0L7.8 1.5L6.5 3Z" fill="none" stroke="#222" stroke-width="0.8"/><path transform="translate(79.5,76.7)" d="M0 1.5L1.3 0L2.6 1.5L1.3 3ZM2.6 1.5L3.9 0L5.2 1.5L3.9 3ZM5.2 1.5L6.5 0L7.8 1.5L6.5 3Z" fill="none" stroke="#222" stroke-width="0.8"/></svg>
<div class="r" style="left:429px;top:469px;width:581px;height:81px;border:1px solid #d5dfe5;border-radius:3px;box-sizing:border-box"></div>
<div class="r" style="left:435px;top:463px;width:108px;height:12px;background:#f0f0f0"></div>
<div class="t" style="left:437px;top:462.85px;font-size:11.4px;line-height:11.4px;color:#000;">Element Formatting:</div>
<div class="r" style="left:428px;top:555px;width:13px;height:13px;border:1px solid #8f8f8f;box-sizing:border-box;background:linear-gradient(135deg,#dcdcdc,#fafafa)"></div>
<div class="r" style="left:430px;top:557px;width:9px;height:9px;border:1px solid #c9c9c9;box-sizing:border-box;background:linear-gradient(135deg,#cbcbcb,#f6f6f6)"></div>
<div class="t" style="left:448px;top:555.60px;font-size:11.69px;line-height:11.69px;color:#000;"><u>S</u>et as default table style for this document</div>
<div class="r" style="left:852px;top:574px;width:73px;height:21px;border:1px solid #3c7fb1;border-radius:3px;box-sizing:border-box;box-shadow:inset 0 0 0 1px #48c6f5;background:linear-gradient(#f2f2f2 0%,#ebebeb 50%,#dddddd 51%,#cfcfcf 100%)"></div>
<div class="t" style="left:788.5px;width:200px;text-align:center;top:579.86px;font-size:10.8px;line-height:10.8px;color:#000;">OK</div>
<div class="r" style="left:936px;top:574px;width:73px;height:21px;border:1px solid #707070;border-radius:3px;box-sizing:border-box;background:linear-gradient(#f2f2f2 0%,#ebebeb 50%,#dddddd 51%,#cfcfcf 100%)"></div>
<div class="t" style="left:872px;width:200px;text-align:center;top:579.86px;font-size:10.8px;line-height:10.8px;color:#000;">Cancel</div>
<svg class="r" style="left:1230px;top:540px" width="150" height="275" viewBox="0 0 150 275">
<!-- trousers -->
<path d="M30.2 238 L31 276 L104 276 L104.2 236 Z" fill="#0d233b"/><path d="M60 246 L62 276 L104 276 L104.2 246 Z" fill="#0c1f33"/>
<!-- right hand -->
<path d="M110.5 238 L130.5 240 Q133.5 250 132.8 262 Q131.5 270 128 274 Q123 267 121 259 L119 268 Q113.5 262 111.5 253 Z" fill="#f1c089"/>
<path d="M124 250 L128 268 M121 248 L123 262" stroke="#d9a46c" stroke-width="0.8" fill="none"/>
<path d="M111 236 L131 238 L131 242 L111 240 Z" fill="#e6e6e6"/>
<path d="M111 237.5 L119 239" stroke="#7a4a22" stroke-width="2.4"/><rect x="119" y="238" width="9" height="4" fill="#cfe0e8"/>
<!-- left hand -->
<path d="M11.5 234 L25 235 Q26.5 250 23 261 Q18 268 12.5 268 Q6 259 5.7 248 Z" fill="#f1c089"/>
<path d="M13 246 Q12 254 14 262" stroke="#c99060" stroke-width="1.2" fill="none"/>
<path d="M11.5 228.5 L25 229.5 L25 234 L11.5 233 Z" fill="#ececec"/>
<path d="M12.5 232.8 L25 234" stroke="#9a6a3a" stroke-width="2"/>
<!-- jacket torso + left arm -->
<path d="M21 95 Q34 88 50 80 L86 72 Q104 84 118 91 L110 123 L108.5 162 L107.5 245 Q66 250 26 248 L25 234 L12 229 Q13 180 15 135 Q16 110 21 95 Z" fill="#11304f"/>
<!-- right arm -->
<path d="M112 91 Q125 92 130 104 Q136 130 138 162 Q137 200 133.5 238.5 L111 236.5 L110.3 162 L110.5 123 Z" fill="#11304f"/>
<path d="M18 112 Q16 170 13 229" stroke="#0c2540" stroke-width="1" fill="none"/>
<!-- neck -->
<path d="M54 60 L87 56 L87 68 L72 77 L54 76 Z" fill="#dfa876"/>
<!-- shirt -->
<path d="M47 73 L60 76 L72 76 L86 64 L90 68 L83 82 L52 137 L49 80 Z" fill="#eeeeee"/>
<path d="M51 78 L60 90 L51 93 Z" fill="#dcdcdc"/>
<path d="M88 68 L75 93 L66 84 Z" fill="#dddddd"/>
<!-- tie -->
<path d="M58 81 L69 80 L67 88 L60 89 Z" fill="#e3241b"/>
<path d="M60 88 L67 88 L64 112 L52 135 L53 110 Z" fill="#e3241b"/>
<path d="M63 90 L60 118" stroke="#c41a14" stroke-width="0.8"/>
<!-- lapels -->
<path d="M49 75 L39 91 L45 112 L52 137 Z" fill="#0d2744"/>
<path d="M88 68 L93 88 L90 92 L96 96 L52 137 L83 82 Z" fill="#0d2744"/>
<path d="M52 137 Q51 200 52 229 Q56 244 66.7 246" stroke="#0b2038" stroke-width="1" fill="none"/>
<circle cx="56.4" cy="155.4" r="2.2" fill="#081626"/><circle cx="57" cy="175.8" r="2.2" fill="#081626"/><circle cx="57.7" cy="196.3" r="2.2" fill="#081626"/>
<path d="M80 22 L91 25 L91 50 L84 60 Z" fill="#e2ac77"/>
<!-- ear -->
<path d="M86 38 Q92 34 92 42 Q91 51 86 52 Z" fill="#e5b07a"/>
<!-- head -->
<path d="M48 30 Q46 46 49 58 Q54 66 62 68 Q74 66 82 60 Q86 52 86 40 L88 26 Q78 14 64 16 Q50 18 48 30 Z" fill="#f3c48d"/>
<path d="M78 24 Q88 30 86 44 Q85 56 82 60 Q76 64 70 66 Q80 56 80 44 Q81 32 78 24 Z" fill="#e2ac77"/>
<!-- hair -->
<path d="M47 34 Q43 16 56 9 Q68 4 80 8 Q92 14 91 26 L90 38 Q86 30 84 24 Q74 19 62 22 Q52 24 48 34 Z" fill="#7b4b2b"/>
<path d="M56 13 Q66 9 79 13" stroke="#5e3820" stroke-width="1.2" fill="none"/>
<!-- face details -->
<path d="M50 33.5 Q54 32 58 33.5 M66.5 34 Q72 32 77.5 35" stroke="#6b4225" stroke-width="1.5" fill="none"/>
<ellipse cx="54" cy="38" rx="3" ry="1.3" fill="#fff"/><ellipse cx="70.5" cy="38.5" rx="3.6" ry="1.5" fill="#fff"/>
<circle cx="53" cy="38" r="1.1" fill="#2b3544"/><circle cx="69" cy="38.5" r="1.2" fill="#2b3544"/>
<path d="M60 41 Q62 47 58 50 Q62 51 65 49.5" stroke="#c9935e" stroke-width="1" fill="none"/>
<path d="M53.5 56 Q60 58.5 68 56" stroke="#b57a57" stroke-width="2" fill="none"/>
</svg>
</body></html>
